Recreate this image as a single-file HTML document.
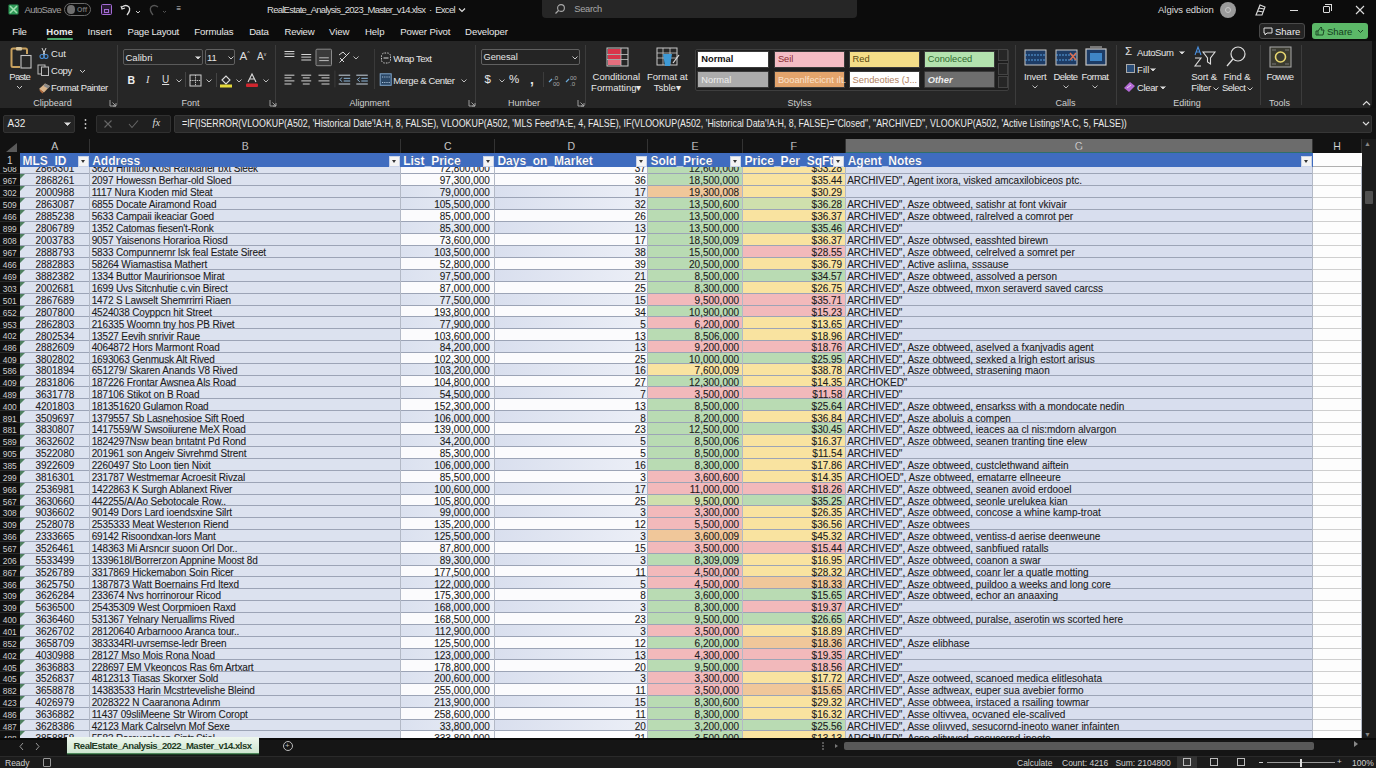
<!DOCTYPE html><html><head><meta charset="utf-8"><style>
*{box-sizing:border-box}
html,body{margin:0;padding:0}
body{width:1376px;height:768px;overflow:hidden;position:relative;background:#101010;font-family:"Liberation Sans",sans-serif;color:#e6e6e6}
.a{position:absolute}
.t{position:absolute;white-space:nowrap;line-height:1}
.grid .t{font-size:10px;color:#1c1c1c;-webkit-text-stroke:0.1px #1c1c1c}
.rh{position:absolute;left:0;width:19.6px;text-align:center;font-size:8.4px;color:#cfcfcf;white-space:nowrap;line-height:1}
</style></head><body>
<div class="grid"><div class="a" style="left:0;top:138px;width:20px;height:599.6px;background:#111"></div><div class="a" style="left:0;top:167.4px;width:1362px;height:570.20px;overflow:hidden"><div class="a" style="left:20.0px;top:-6.00px;width:380.7px;height:12.00px;background:#dce2ef"></div><div class="a" style="left:400.7px;top:-6.00px;width:247.2px;height:12.00px;background:#fbfbfd"></div><div class="a" style="left:647.9px;top:-6.00px;width:94.2px;height:12.00px;background:#b9dbb3"></div><div class="a" style="left:742.1px;top:-6.00px;width:103.1px;height:12.00px;background:#f9e3a0"></div><div class="a" style="left:845.2px;top:-6.00px;width:467.3px;height:12.00px;background:#d8deee"></div><div class="a" style="left:1312.5px;top:-6.00px;width:49.0px;height:12.00px;background:#fdfdfd"></div><div class="a" style="left:20.0px;top:6.00px;width:380.7px;height:12.00px;background:#dce2ef"></div><div class="a" style="left:400.7px;top:6.00px;width:247.2px;height:12.00px;background:#fbfbfd"></div><div class="a" style="left:647.9px;top:6.00px;width:94.2px;height:12.00px;background:#b9dbb3"></div><div class="a" style="left:742.1px;top:6.00px;width:103.1px;height:12.00px;background:#f9e3a0"></div><div class="a" style="left:845.2px;top:6.00px;width:467.3px;height:12.00px;background:#d8deee"></div><div class="a" style="left:1312.5px;top:6.00px;width:49.0px;height:12.00px;background:#fdfdfd"></div><div class="a" style="left:20.0px;top:18.00px;width:380.7px;height:12.00px;background:#dce2ef"></div><div class="a" style="left:400.7px;top:18.00px;width:94.2px;height:12.00px;background:linear-gradient(90deg,#dbe1ef,#e9edf6)"></div><div class="a" style="left:494.9px;top:18.00px;width:153.0px;height:12.00px;background:linear-gradient(90deg,#d9dfee,#eceff7)"></div><div class="a" style="left:647.9px;top:18.00px;width:94.2px;height:12.00px;background:#f0c79a"></div><div class="a" style="left:742.1px;top:18.00px;width:103.1px;height:12.00px;background:#f9e3a0"></div><div class="a" style="left:845.2px;top:18.00px;width:467.3px;height:12.00px;background:#d8deee"></div><div class="a" style="left:1312.5px;top:18.00px;width:49.0px;height:12.00px;background:#fdfdfd"></div><div class="a" style="left:20.0px;top:30.00px;width:380.7px;height:12.00px;background:#dce2ef"></div><div class="a" style="left:400.7px;top:30.00px;width:94.2px;height:12.00px;background:linear-gradient(90deg,#dbe1ef,#e9edf6)"></div><div class="a" style="left:494.9px;top:30.00px;width:153.0px;height:12.00px;background:linear-gradient(90deg,#d9dfee,#eceff7)"></div><div class="a" style="left:647.9px;top:30.00px;width:94.2px;height:12.00px;background:#b9dbb3"></div><div class="a" style="left:742.1px;top:30.00px;width:103.1px;height:12.00px;background:#cfe0ad"></div><div class="a" style="left:845.2px;top:30.00px;width:467.3px;height:12.00px;background:#d8deee"></div><div class="a" style="left:1312.5px;top:30.00px;width:49.0px;height:12.00px;background:#fdfdfd"></div><div class="a" style="left:20.0px;top:42.00px;width:380.7px;height:12.00px;background:#dce2ef"></div><div class="a" style="left:400.7px;top:42.00px;width:247.2px;height:12.00px;background:#fbfbfd"></div><div class="a" style="left:647.9px;top:42.00px;width:94.2px;height:12.00px;background:#b9dbb3"></div><div class="a" style="left:742.1px;top:42.00px;width:103.1px;height:12.00px;background:#f9e3a0"></div><div class="a" style="left:845.2px;top:42.00px;width:467.3px;height:12.00px;background:#d8deee"></div><div class="a" style="left:1312.5px;top:42.00px;width:49.0px;height:12.00px;background:#fdfdfd"></div><div class="a" style="left:20.0px;top:54.00px;width:380.7px;height:12.00px;background:#dce2ef"></div><div class="a" style="left:400.7px;top:54.00px;width:94.2px;height:12.00px;background:linear-gradient(90deg,#dbe1ef,#e9edf6)"></div><div class="a" style="left:494.9px;top:54.00px;width:153.0px;height:12.00px;background:linear-gradient(90deg,#d9dfee,#eceff7)"></div><div class="a" style="left:647.9px;top:54.00px;width:94.2px;height:12.00px;background:#b9dbb3"></div><div class="a" style="left:742.1px;top:54.00px;width:103.1px;height:12.00px;background:#b9dbb3"></div><div class="a" style="left:845.2px;top:54.00px;width:467.3px;height:12.00px;background:#d8deee"></div><div class="a" style="left:1312.5px;top:54.00px;width:49.0px;height:12.00px;background:#fdfdfd"></div><div class="a" style="left:20.0px;top:66.00px;width:380.7px;height:11.97px;background:#dce2ef"></div><div class="a" style="left:400.7px;top:66.00px;width:247.2px;height:11.97px;background:#fbfbfd"></div><div class="a" style="left:647.9px;top:66.00px;width:94.2px;height:11.97px;background:#b9dbb3"></div><div class="a" style="left:742.1px;top:66.00px;width:103.1px;height:11.97px;background:#f9e3a0"></div><div class="a" style="left:845.2px;top:66.00px;width:467.3px;height:11.97px;background:#d8deee"></div><div class="a" style="left:1312.5px;top:66.00px;width:49.0px;height:11.97px;background:#fdfdfd"></div><div class="a" style="left:20.0px;top:77.97px;width:380.7px;height:11.98px;background:#dce2ef"></div><div class="a" style="left:400.7px;top:77.97px;width:94.2px;height:11.98px;background:linear-gradient(90deg,#dbe1ef,#e9edf6)"></div><div class="a" style="left:494.9px;top:77.97px;width:153.0px;height:11.98px;background:linear-gradient(90deg,#d9dfee,#eceff7)"></div><div class="a" style="left:647.9px;top:77.97px;width:94.2px;height:11.98px;background:#b9dbb3"></div><div class="a" style="left:742.1px;top:77.97px;width:103.1px;height:11.98px;background:#f2b9bb"></div><div class="a" style="left:845.2px;top:77.97px;width:467.3px;height:11.98px;background:#d8deee"></div><div class="a" style="left:1312.5px;top:77.97px;width:49.0px;height:11.98px;background:#fdfdfd"></div><div class="a" style="left:20.0px;top:89.95px;width:380.7px;height:11.97px;background:#dce2ef"></div><div class="a" style="left:400.7px;top:89.95px;width:247.2px;height:11.97px;background:#fbfbfd"></div><div class="a" style="left:647.9px;top:89.95px;width:94.2px;height:11.97px;background:#b9dbb3"></div><div class="a" style="left:742.1px;top:89.95px;width:103.1px;height:11.97px;background:#f9e3a0"></div><div class="a" style="left:845.2px;top:89.95px;width:467.3px;height:11.97px;background:#d8deee"></div><div class="a" style="left:1312.5px;top:89.95px;width:49.0px;height:11.97px;background:#fdfdfd"></div><div class="a" style="left:20.0px;top:101.92px;width:380.7px;height:11.98px;background:#dce2ef"></div><div class="a" style="left:400.7px;top:101.92px;width:94.2px;height:11.98px;background:linear-gradient(90deg,#dbe1ef,#e9edf6)"></div><div class="a" style="left:494.9px;top:101.92px;width:153.0px;height:11.98px;background:linear-gradient(90deg,#d9dfee,#eceff7)"></div><div class="a" style="left:647.9px;top:101.92px;width:94.2px;height:11.98px;background:#b9dbb3"></div><div class="a" style="left:742.1px;top:101.92px;width:103.1px;height:11.98px;background:#b9dbb3"></div><div class="a" style="left:845.2px;top:101.92px;width:467.3px;height:11.98px;background:#d8deee"></div><div class="a" style="left:1312.5px;top:101.92px;width:49.0px;height:11.98px;background:#fdfdfd"></div><div class="a" style="left:20.0px;top:113.90px;width:380.7px;height:11.90px;background:#dce2ef"></div><div class="a" style="left:400.7px;top:113.90px;width:247.2px;height:11.90px;background:#fbfbfd"></div><div class="a" style="left:647.9px;top:113.90px;width:94.2px;height:11.90px;background:#b9dbb3"></div><div class="a" style="left:742.1px;top:113.90px;width:103.1px;height:11.90px;background:#f9e3a0"></div><div class="a" style="left:845.2px;top:113.90px;width:467.3px;height:11.90px;background:#d8deee"></div><div class="a" style="left:1312.5px;top:113.90px;width:49.0px;height:11.90px;background:#fdfdfd"></div><div class="a" style="left:20.0px;top:125.80px;width:380.7px;height:11.90px;background:#dce2ef"></div><div class="a" style="left:400.7px;top:125.80px;width:94.2px;height:11.90px;background:linear-gradient(90deg,#dbe1ef,#e9edf6)"></div><div class="a" style="left:494.9px;top:125.80px;width:153.0px;height:11.90px;background:linear-gradient(90deg,#d9dfee,#eceff7)"></div><div class="a" style="left:647.9px;top:125.80px;width:94.2px;height:11.90px;background:#f2b9bb"></div><div class="a" style="left:742.1px;top:125.80px;width:103.1px;height:11.90px;background:#f2b9bb"></div><div class="a" style="left:845.2px;top:125.80px;width:467.3px;height:11.90px;background:#d8deee"></div><div class="a" style="left:1312.5px;top:125.80px;width:49.0px;height:11.90px;background:#fdfdfd"></div><div class="a" style="left:20.0px;top:137.70px;width:380.7px;height:11.90px;background:#dce2ef"></div><div class="a" style="left:400.7px;top:137.70px;width:247.2px;height:11.90px;background:#fbfbfd"></div><div class="a" style="left:647.9px;top:137.70px;width:94.2px;height:11.90px;background:#b9dbb3"></div><div class="a" style="left:742.1px;top:137.70px;width:103.1px;height:11.90px;background:#f2b9bb"></div><div class="a" style="left:845.2px;top:137.70px;width:467.3px;height:11.90px;background:#d8deee"></div><div class="a" style="left:1312.5px;top:137.70px;width:49.0px;height:11.90px;background:#fdfdfd"></div><div class="a" style="left:20.0px;top:149.60px;width:380.7px;height:11.90px;background:#dce2ef"></div><div class="a" style="left:400.7px;top:149.60px;width:94.2px;height:11.90px;background:linear-gradient(90deg,#dbe1ef,#e9edf6)"></div><div class="a" style="left:494.9px;top:149.60px;width:153.0px;height:11.90px;background:linear-gradient(90deg,#d9dfee,#eceff7)"></div><div class="a" style="left:647.9px;top:149.60px;width:94.2px;height:11.90px;background:#f2b9bb"></div><div class="a" style="left:742.1px;top:149.60px;width:103.1px;height:11.90px;background:#f9e3a0"></div><div class="a" style="left:845.2px;top:149.60px;width:467.3px;height:11.90px;background:#d8deee"></div><div class="a" style="left:1312.5px;top:149.60px;width:49.0px;height:11.90px;background:#fdfdfd"></div><div class="a" style="left:20.0px;top:161.50px;width:380.7px;height:11.90px;background:#dce2ef"></div><div class="a" style="left:400.7px;top:161.50px;width:247.2px;height:11.90px;background:#fbfbfd"></div><div class="a" style="left:647.9px;top:161.50px;width:94.2px;height:11.90px;background:#b9dbb3"></div><div class="a" style="left:742.1px;top:161.50px;width:103.1px;height:11.90px;background:#f9e3a0"></div><div class="a" style="left:845.2px;top:161.50px;width:467.3px;height:11.90px;background:#d8deee"></div><div class="a" style="left:1312.5px;top:161.50px;width:49.0px;height:11.90px;background:#fdfdfd"></div><div class="a" style="left:20.0px;top:173.40px;width:380.7px;height:11.60px;background:#dce2ef"></div><div class="a" style="left:400.7px;top:173.40px;width:94.2px;height:11.60px;background:linear-gradient(90deg,#dbe1ef,#e9edf6)"></div><div class="a" style="left:494.9px;top:173.40px;width:153.0px;height:11.60px;background:linear-gradient(90deg,#d9dfee,#eceff7)"></div><div class="a" style="left:647.9px;top:173.40px;width:94.2px;height:11.60px;background:#f2b9bb"></div><div class="a" style="left:742.1px;top:173.40px;width:103.1px;height:11.60px;background:#f2b9bb"></div><div class="a" style="left:845.2px;top:173.40px;width:467.3px;height:11.60px;background:#d8deee"></div><div class="a" style="left:1312.5px;top:173.40px;width:49.0px;height:11.60px;background:#fdfdfd"></div><div class="a" style="left:20.0px;top:185.00px;width:380.7px;height:11.40px;background:#dce2ef"></div><div class="a" style="left:400.7px;top:185.00px;width:247.2px;height:11.40px;background:#fbfbfd"></div><div class="a" style="left:647.9px;top:185.00px;width:94.2px;height:11.40px;background:#b9dbb3"></div><div class="a" style="left:742.1px;top:185.00px;width:103.1px;height:11.40px;background:#b9dbb3"></div><div class="a" style="left:845.2px;top:185.00px;width:467.3px;height:11.40px;background:#d8deee"></div><div class="a" style="left:1312.5px;top:185.00px;width:49.0px;height:11.40px;background:#fdfdfd"></div><div class="a" style="left:20.0px;top:196.40px;width:380.7px;height:11.50px;background:#dce2ef"></div><div class="a" style="left:400.7px;top:196.40px;width:94.2px;height:11.50px;background:linear-gradient(90deg,#dbe1ef,#e9edf6)"></div><div class="a" style="left:494.9px;top:196.40px;width:153.0px;height:11.50px;background:linear-gradient(90deg,#d9dfee,#eceff7)"></div><div class="a" style="left:647.9px;top:196.40px;width:94.2px;height:11.50px;background:#f9e3a0"></div><div class="a" style="left:742.1px;top:196.40px;width:103.1px;height:11.50px;background:#f9e3a0"></div><div class="a" style="left:845.2px;top:196.40px;width:467.3px;height:11.50px;background:#d8deee"></div><div class="a" style="left:1312.5px;top:196.40px;width:49.0px;height:11.50px;background:#fdfdfd"></div><div class="a" style="left:20.0px;top:207.90px;width:380.7px;height:11.70px;background:#dce2ef"></div><div class="a" style="left:400.7px;top:207.90px;width:247.2px;height:11.70px;background:#fbfbfd"></div><div class="a" style="left:647.9px;top:207.90px;width:94.2px;height:11.70px;background:#b9dbb3"></div><div class="a" style="left:742.1px;top:207.90px;width:103.1px;height:11.70px;background:#f9e3a0"></div><div class="a" style="left:845.2px;top:207.90px;width:467.3px;height:11.70px;background:#d8deee"></div><div class="a" style="left:1312.5px;top:207.90px;width:49.0px;height:11.70px;background:#fdfdfd"></div><div class="a" style="left:20.0px;top:219.60px;width:380.7px;height:12.00px;background:#dce2ef"></div><div class="a" style="left:400.7px;top:219.60px;width:94.2px;height:12.00px;background:linear-gradient(90deg,#dbe1ef,#e9edf6)"></div><div class="a" style="left:494.9px;top:219.60px;width:153.0px;height:12.00px;background:linear-gradient(90deg,#d9dfee,#eceff7)"></div><div class="a" style="left:647.9px;top:219.60px;width:94.2px;height:12.00px;background:#f2b9bb"></div><div class="a" style="left:742.1px;top:219.60px;width:103.1px;height:12.00px;background:#f2b9bb"></div><div class="a" style="left:845.2px;top:219.60px;width:467.3px;height:12.00px;background:#d8deee"></div><div class="a" style="left:1312.5px;top:219.60px;width:49.0px;height:12.00px;background:#fdfdfd"></div><div class="a" style="left:20.0px;top:231.60px;width:380.7px;height:12.00px;background:#dce2ef"></div><div class="a" style="left:400.7px;top:231.60px;width:247.2px;height:12.00px;background:#fbfbfd"></div><div class="a" style="left:647.9px;top:231.60px;width:94.2px;height:12.00px;background:#b9dbb3"></div><div class="a" style="left:742.1px;top:231.60px;width:103.1px;height:12.00px;background:#b9dbb3"></div><div class="a" style="left:845.2px;top:231.60px;width:467.3px;height:12.00px;background:#d8deee"></div><div class="a" style="left:1312.5px;top:231.60px;width:49.0px;height:12.00px;background:#fdfdfd"></div><div class="a" style="left:20.0px;top:243.60px;width:380.7px;height:11.70px;background:#dce2ef"></div><div class="a" style="left:400.7px;top:243.60px;width:94.2px;height:11.70px;background:linear-gradient(90deg,#dbe1ef,#e9edf6)"></div><div class="a" style="left:494.9px;top:243.60px;width:153.0px;height:11.70px;background:linear-gradient(90deg,#d9dfee,#eceff7)"></div><div class="a" style="left:647.9px;top:243.60px;width:94.2px;height:11.70px;background:#b9dbb3"></div><div class="a" style="left:742.1px;top:243.60px;width:103.1px;height:11.70px;background:#f9e3a0"></div><div class="a" style="left:845.2px;top:243.60px;width:467.3px;height:11.70px;background:#d8deee"></div><div class="a" style="left:1312.5px;top:243.60px;width:49.0px;height:11.70px;background:#fdfdfd"></div><div class="a" style="left:20.0px;top:255.30px;width:380.7px;height:11.87px;background:#dce2ef"></div><div class="a" style="left:400.7px;top:255.30px;width:247.2px;height:11.87px;background:#fbfbfd"></div><div class="a" style="left:647.9px;top:255.30px;width:94.2px;height:11.87px;background:#b9dbb3"></div><div class="a" style="left:742.1px;top:255.30px;width:103.1px;height:11.87px;background:#b9dbb3"></div><div class="a" style="left:845.2px;top:255.30px;width:467.3px;height:11.87px;background:#d8deee"></div><div class="a" style="left:1312.5px;top:255.30px;width:49.0px;height:11.87px;background:#fdfdfd"></div><div class="a" style="left:20.0px;top:267.17px;width:380.7px;height:11.87px;background:#dce2ef"></div><div class="a" style="left:400.7px;top:267.17px;width:94.2px;height:11.87px;background:linear-gradient(90deg,#dbe1ef,#e9edf6)"></div><div class="a" style="left:494.9px;top:267.17px;width:153.0px;height:11.87px;background:linear-gradient(90deg,#d9dfee,#eceff7)"></div><div class="a" style="left:647.9px;top:267.17px;width:94.2px;height:11.87px;background:#b9dbb3"></div><div class="a" style="left:742.1px;top:267.17px;width:103.1px;height:11.87px;background:#f9e3a0"></div><div class="a" style="left:845.2px;top:267.17px;width:467.3px;height:11.87px;background:#d8deee"></div><div class="a" style="left:1312.5px;top:267.17px;width:49.0px;height:11.87px;background:#fdfdfd"></div><div class="a" style="left:20.0px;top:279.03px;width:380.7px;height:11.87px;background:#dce2ef"></div><div class="a" style="left:400.7px;top:279.03px;width:247.2px;height:11.87px;background:#fbfbfd"></div><div class="a" style="left:647.9px;top:279.03px;width:94.2px;height:11.87px;background:#b9dbb3"></div><div class="a" style="left:742.1px;top:279.03px;width:103.1px;height:11.87px;background:#f9e3a0"></div><div class="a" style="left:845.2px;top:279.03px;width:467.3px;height:11.87px;background:#d8deee"></div><div class="a" style="left:1312.5px;top:279.03px;width:49.0px;height:11.87px;background:#fdfdfd"></div><div class="a" style="left:20.0px;top:290.90px;width:380.7px;height:11.97px;background:#dce2ef"></div><div class="a" style="left:400.7px;top:290.90px;width:94.2px;height:11.97px;background:linear-gradient(90deg,#dbe1ef,#e9edf6)"></div><div class="a" style="left:494.9px;top:290.90px;width:153.0px;height:11.97px;background:linear-gradient(90deg,#d9dfee,#eceff7)"></div><div class="a" style="left:647.9px;top:290.90px;width:94.2px;height:11.97px;background:#b9dbb3"></div><div class="a" style="left:742.1px;top:290.90px;width:103.1px;height:11.97px;background:#f9e3a0"></div><div class="a" style="left:845.2px;top:290.90px;width:467.3px;height:11.97px;background:#d8deee"></div><div class="a" style="left:1312.5px;top:290.90px;width:49.0px;height:11.97px;background:#fdfdfd"></div><div class="a" style="left:20.0px;top:302.87px;width:380.7px;height:11.97px;background:#dce2ef"></div><div class="a" style="left:400.7px;top:302.87px;width:247.2px;height:11.97px;background:#fbfbfd"></div><div class="a" style="left:647.9px;top:302.87px;width:94.2px;height:11.97px;background:#f2b9bb"></div><div class="a" style="left:742.1px;top:302.87px;width:103.1px;height:11.97px;background:#f9e3a0"></div><div class="a" style="left:845.2px;top:302.87px;width:467.3px;height:11.97px;background:#d8deee"></div><div class="a" style="left:1312.5px;top:302.87px;width:49.0px;height:11.97px;background:#fdfdfd"></div><div class="a" style="left:20.0px;top:314.83px;width:380.7px;height:11.97px;background:#dce2ef"></div><div class="a" style="left:400.7px;top:314.83px;width:94.2px;height:11.97px;background:linear-gradient(90deg,#dbe1ef,#e9edf6)"></div><div class="a" style="left:494.9px;top:314.83px;width:153.0px;height:11.97px;background:linear-gradient(90deg,#d9dfee,#eceff7)"></div><div class="a" style="left:647.9px;top:314.83px;width:94.2px;height:11.97px;background:#f2b9bb"></div><div class="a" style="left:742.1px;top:314.83px;width:103.1px;height:11.97px;background:#f2b9bb"></div><div class="a" style="left:845.2px;top:314.83px;width:467.3px;height:11.97px;background:#d8deee"></div><div class="a" style="left:1312.5px;top:314.83px;width:49.0px;height:11.97px;background:#fdfdfd"></div><div class="a" style="left:20.0px;top:326.80px;width:380.7px;height:11.50px;background:#dce2ef"></div><div class="a" style="left:400.7px;top:326.80px;width:247.2px;height:11.50px;background:#fbfbfd"></div><div class="a" style="left:647.9px;top:326.80px;width:94.2px;height:11.50px;background:#cfe0ad"></div><div class="a" style="left:742.1px;top:326.80px;width:103.1px;height:11.50px;background:#b9dbb3"></div><div class="a" style="left:845.2px;top:326.80px;width:467.3px;height:11.50px;background:#d8deee"></div><div class="a" style="left:1312.5px;top:326.80px;width:49.0px;height:11.50px;background:#fdfdfd"></div><div class="a" style="left:20.0px;top:338.30px;width:380.7px;height:11.90px;background:#dce2ef"></div><div class="a" style="left:400.7px;top:338.30px;width:94.2px;height:11.90px;background:linear-gradient(90deg,#dbe1ef,#e9edf6)"></div><div class="a" style="left:494.9px;top:338.30px;width:153.0px;height:11.90px;background:linear-gradient(90deg,#d9dfee,#eceff7)"></div><div class="a" style="left:647.9px;top:338.30px;width:94.2px;height:11.90px;background:#f2b9bb"></div><div class="a" style="left:742.1px;top:338.30px;width:103.1px;height:11.90px;background:#f9e3a0"></div><div class="a" style="left:845.2px;top:338.30px;width:467.3px;height:11.90px;background:#d8deee"></div><div class="a" style="left:1312.5px;top:338.30px;width:49.0px;height:11.90px;background:#fdfdfd"></div><div class="a" style="left:20.0px;top:350.20px;width:380.7px;height:11.90px;background:#dce2ef"></div><div class="a" style="left:400.7px;top:350.20px;width:247.2px;height:11.90px;background:#fbfbfd"></div><div class="a" style="left:647.9px;top:350.20px;width:94.2px;height:11.90px;background:#f2b9bb"></div><div class="a" style="left:742.1px;top:350.20px;width:103.1px;height:11.90px;background:#f9e3a0"></div><div class="a" style="left:845.2px;top:350.20px;width:467.3px;height:11.90px;background:#d8deee"></div><div class="a" style="left:1312.5px;top:350.20px;width:49.0px;height:11.90px;background:#fdfdfd"></div><div class="a" style="left:20.0px;top:362.10px;width:380.7px;height:11.87px;background:#dce2ef"></div><div class="a" style="left:400.7px;top:362.10px;width:94.2px;height:11.87px;background:linear-gradient(90deg,#dbe1ef,#e9edf6)"></div><div class="a" style="left:494.9px;top:362.10px;width:153.0px;height:11.87px;background:linear-gradient(90deg,#d9dfee,#eceff7)"></div><div class="a" style="left:647.9px;top:362.10px;width:94.2px;height:11.87px;background:#f0c79a"></div><div class="a" style="left:742.1px;top:362.10px;width:103.1px;height:11.87px;background:#f9e3a0"></div><div class="a" style="left:845.2px;top:362.10px;width:467.3px;height:11.87px;background:#d8deee"></div><div class="a" style="left:1312.5px;top:362.10px;width:49.0px;height:11.87px;background:#fdfdfd"></div><div class="a" style="left:20.0px;top:373.97px;width:380.7px;height:11.87px;background:#dce2ef"></div><div class="a" style="left:400.7px;top:373.97px;width:247.2px;height:11.87px;background:#fbfbfd"></div><div class="a" style="left:647.9px;top:373.97px;width:94.2px;height:11.87px;background:#f2b9bb"></div><div class="a" style="left:742.1px;top:373.97px;width:103.1px;height:11.87px;background:#f2b9bb"></div><div class="a" style="left:845.2px;top:373.97px;width:467.3px;height:11.87px;background:#d8deee"></div><div class="a" style="left:1312.5px;top:373.97px;width:49.0px;height:11.87px;background:#fdfdfd"></div><div class="a" style="left:20.0px;top:385.83px;width:380.7px;height:11.87px;background:#dce2ef"></div><div class="a" style="left:400.7px;top:385.83px;width:94.2px;height:11.87px;background:linear-gradient(90deg,#dbe1ef,#e9edf6)"></div><div class="a" style="left:494.9px;top:385.83px;width:153.0px;height:11.87px;background:linear-gradient(90deg,#d9dfee,#eceff7)"></div><div class="a" style="left:647.9px;top:385.83px;width:94.2px;height:11.87px;background:#b9dbb3"></div><div class="a" style="left:742.1px;top:385.83px;width:103.1px;height:11.87px;background:#f9e3a0"></div><div class="a" style="left:845.2px;top:385.83px;width:467.3px;height:11.87px;background:#d8deee"></div><div class="a" style="left:1312.5px;top:385.83px;width:49.0px;height:11.87px;background:#fdfdfd"></div><div class="a" style="left:20.0px;top:397.70px;width:380.7px;height:11.83px;background:#dce2ef"></div><div class="a" style="left:400.7px;top:397.70px;width:247.2px;height:11.83px;background:#fbfbfd"></div><div class="a" style="left:647.9px;top:397.70px;width:94.2px;height:11.83px;background:#f2b9bb"></div><div class="a" style="left:742.1px;top:397.70px;width:103.1px;height:11.83px;background:#f9e3a0"></div><div class="a" style="left:845.2px;top:397.70px;width:467.3px;height:11.83px;background:#d8deee"></div><div class="a" style="left:1312.5px;top:397.70px;width:49.0px;height:11.83px;background:#fdfdfd"></div><div class="a" style="left:20.0px;top:409.53px;width:380.7px;height:11.83px;background:#dce2ef"></div><div class="a" style="left:400.7px;top:409.53px;width:94.2px;height:11.83px;background:linear-gradient(90deg,#dbe1ef,#e9edf6)"></div><div class="a" style="left:494.9px;top:409.53px;width:153.0px;height:11.83px;background:linear-gradient(90deg,#d9dfee,#eceff7)"></div><div class="a" style="left:647.9px;top:409.53px;width:94.2px;height:11.83px;background:#f2b9bb"></div><div class="a" style="left:742.1px;top:409.53px;width:103.1px;height:11.83px;background:#f0c79a"></div><div class="a" style="left:845.2px;top:409.53px;width:467.3px;height:11.83px;background:#d8deee"></div><div class="a" style="left:1312.5px;top:409.53px;width:49.0px;height:11.83px;background:#fdfdfd"></div><div class="a" style="left:20.0px;top:421.37px;width:380.7px;height:11.83px;background:#dce2ef"></div><div class="a" style="left:400.7px;top:421.37px;width:247.2px;height:11.83px;background:#fbfbfd"></div><div class="a" style="left:647.9px;top:421.37px;width:94.2px;height:11.83px;background:#b9dbb3"></div><div class="a" style="left:742.1px;top:421.37px;width:103.1px;height:11.83px;background:#b9dbb3"></div><div class="a" style="left:845.2px;top:421.37px;width:467.3px;height:11.83px;background:#d8deee"></div><div class="a" style="left:1312.5px;top:421.37px;width:49.0px;height:11.83px;background:#fdfdfd"></div><div class="a" style="left:20.0px;top:433.20px;width:380.7px;height:11.90px;background:#dce2ef"></div><div class="a" style="left:400.7px;top:433.20px;width:94.2px;height:11.90px;background:linear-gradient(90deg,#dbe1ef,#e9edf6)"></div><div class="a" style="left:494.9px;top:433.20px;width:153.0px;height:11.90px;background:linear-gradient(90deg,#d9dfee,#eceff7)"></div><div class="a" style="left:647.9px;top:433.20px;width:94.2px;height:11.90px;background:#b9dbb3"></div><div class="a" style="left:742.1px;top:433.20px;width:103.1px;height:11.90px;background:#f2b9bb"></div><div class="a" style="left:845.2px;top:433.20px;width:467.3px;height:11.90px;background:#d8deee"></div><div class="a" style="left:1312.5px;top:433.20px;width:49.0px;height:11.90px;background:#fdfdfd"></div><div class="a" style="left:20.0px;top:445.10px;width:380.7px;height:11.90px;background:#dce2ef"></div><div class="a" style="left:400.7px;top:445.10px;width:247.2px;height:11.90px;background:#fbfbfd"></div><div class="a" style="left:647.9px;top:445.10px;width:94.2px;height:11.90px;background:#b9dbb3"></div><div class="a" style="left:742.1px;top:445.10px;width:103.1px;height:11.90px;background:#b9dbb3"></div><div class="a" style="left:845.2px;top:445.10px;width:467.3px;height:11.90px;background:#d8deee"></div><div class="a" style="left:1312.5px;top:445.10px;width:49.0px;height:11.90px;background:#fdfdfd"></div><div class="a" style="left:20.0px;top:457.00px;width:380.7px;height:11.90px;background:#dce2ef"></div><div class="a" style="left:400.7px;top:457.00px;width:94.2px;height:11.90px;background:linear-gradient(90deg,#dbe1ef,#e9edf6)"></div><div class="a" style="left:494.9px;top:457.00px;width:153.0px;height:11.90px;background:linear-gradient(90deg,#d9dfee,#eceff7)"></div><div class="a" style="left:647.9px;top:457.00px;width:94.2px;height:11.90px;background:#f2b9bb"></div><div class="a" style="left:742.1px;top:457.00px;width:103.1px;height:11.90px;background:#f9e3a0"></div><div class="a" style="left:845.2px;top:457.00px;width:467.3px;height:11.90px;background:#d8deee"></div><div class="a" style="left:1312.5px;top:457.00px;width:49.0px;height:11.90px;background:#fdfdfd"></div><div class="a" style="left:20.0px;top:468.90px;width:380.7px;height:11.83px;background:#dce2ef"></div><div class="a" style="left:400.7px;top:468.90px;width:247.2px;height:11.83px;background:#fbfbfd"></div><div class="a" style="left:647.9px;top:468.90px;width:94.2px;height:11.83px;background:#b9dbb3"></div><div class="a" style="left:742.1px;top:468.90px;width:103.1px;height:11.83px;background:#f0c79a"></div><div class="a" style="left:845.2px;top:468.90px;width:467.3px;height:11.83px;background:#d8deee"></div><div class="a" style="left:1312.5px;top:468.90px;width:49.0px;height:11.83px;background:#fdfdfd"></div><div class="a" style="left:20.0px;top:480.73px;width:380.7px;height:11.83px;background:#dce2ef"></div><div class="a" style="left:400.7px;top:480.73px;width:94.2px;height:11.83px;background:linear-gradient(90deg,#dbe1ef,#e9edf6)"></div><div class="a" style="left:494.9px;top:480.73px;width:153.0px;height:11.83px;background:linear-gradient(90deg,#d9dfee,#eceff7)"></div><div class="a" style="left:647.9px;top:480.73px;width:94.2px;height:11.83px;background:#f2b9bb"></div><div class="a" style="left:742.1px;top:480.73px;width:103.1px;height:11.83px;background:#f2b9bb"></div><div class="a" style="left:845.2px;top:480.73px;width:467.3px;height:11.83px;background:#d8deee"></div><div class="a" style="left:1312.5px;top:480.73px;width:49.0px;height:11.83px;background:#fdfdfd"></div><div class="a" style="left:20.0px;top:492.57px;width:380.7px;height:11.83px;background:#dce2ef"></div><div class="a" style="left:400.7px;top:492.57px;width:247.2px;height:11.83px;background:#fbfbfd"></div><div class="a" style="left:647.9px;top:492.57px;width:94.2px;height:11.83px;background:#b9dbb3"></div><div class="a" style="left:742.1px;top:492.57px;width:103.1px;height:11.83px;background:#f2b9bb"></div><div class="a" style="left:845.2px;top:492.57px;width:467.3px;height:11.83px;background:#d8deee"></div><div class="a" style="left:1312.5px;top:492.57px;width:49.0px;height:11.83px;background:#fdfdfd"></div><div class="a" style="left:20.0px;top:504.40px;width:380.7px;height:11.80px;background:#dce2ef"></div><div class="a" style="left:400.7px;top:504.40px;width:94.2px;height:11.80px;background:linear-gradient(90deg,#dbe1ef,#e9edf6)"></div><div class="a" style="left:494.9px;top:504.40px;width:153.0px;height:11.80px;background:linear-gradient(90deg,#d9dfee,#eceff7)"></div><div class="a" style="left:647.9px;top:504.40px;width:94.2px;height:11.80px;background:#f2b9bb"></div><div class="a" style="left:742.1px;top:504.40px;width:103.1px;height:11.80px;background:#f9e3a0"></div><div class="a" style="left:845.2px;top:504.40px;width:467.3px;height:11.80px;background:#d8deee"></div><div class="a" style="left:1312.5px;top:504.40px;width:49.0px;height:11.80px;background:#fdfdfd"></div><div class="a" style="left:20.0px;top:516.20px;width:380.7px;height:11.80px;background:#dce2ef"></div><div class="a" style="left:400.7px;top:516.20px;width:247.2px;height:11.80px;background:#fbfbfd"></div><div class="a" style="left:647.9px;top:516.20px;width:94.2px;height:11.80px;background:#f2b9bb"></div><div class="a" style="left:742.1px;top:516.20px;width:103.1px;height:11.80px;background:#f0c79a"></div><div class="a" style="left:845.2px;top:516.20px;width:467.3px;height:11.80px;background:#d8deee"></div><div class="a" style="left:1312.5px;top:516.20px;width:49.0px;height:11.80px;background:#fdfdfd"></div><div class="a" style="left:20.0px;top:528.00px;width:380.7px;height:11.80px;background:#dce2ef"></div><div class="a" style="left:400.7px;top:528.00px;width:94.2px;height:11.80px;background:linear-gradient(90deg,#dbe1ef,#e9edf6)"></div><div class="a" style="left:494.9px;top:528.00px;width:153.0px;height:11.80px;background:linear-gradient(90deg,#d9dfee,#eceff7)"></div><div class="a" style="left:647.9px;top:528.00px;width:94.2px;height:11.80px;background:#b9dbb3"></div><div class="a" style="left:742.1px;top:528.00px;width:103.1px;height:11.80px;background:#f9e3a0"></div><div class="a" style="left:845.2px;top:528.00px;width:467.3px;height:11.80px;background:#d8deee"></div><div class="a" style="left:1312.5px;top:528.00px;width:49.0px;height:11.80px;background:#fdfdfd"></div><div class="a" style="left:20.0px;top:539.80px;width:380.7px;height:11.90px;background:#dce2ef"></div><div class="a" style="left:400.7px;top:539.80px;width:247.2px;height:11.90px;background:#fbfbfd"></div><div class="a" style="left:647.9px;top:539.80px;width:94.2px;height:11.90px;background:#b9dbb3"></div><div class="a" style="left:742.1px;top:539.80px;width:103.1px;height:11.90px;background:#f9e3a0"></div><div class="a" style="left:845.2px;top:539.80px;width:467.3px;height:11.90px;background:#d8deee"></div><div class="a" style="left:1312.5px;top:539.80px;width:49.0px;height:11.90px;background:#fdfdfd"></div><div class="a" style="left:20.0px;top:551.70px;width:380.7px;height:11.90px;background:#dce2ef"></div><div class="a" style="left:400.7px;top:551.70px;width:94.2px;height:11.90px;background:linear-gradient(90deg,#dbe1ef,#e9edf6)"></div><div class="a" style="left:494.9px;top:551.70px;width:153.0px;height:11.90px;background:linear-gradient(90deg,#d9dfee,#eceff7)"></div><div class="a" style="left:647.9px;top:551.70px;width:94.2px;height:11.90px;background:#b9dbb3"></div><div class="a" style="left:742.1px;top:551.70px;width:103.1px;height:11.90px;background:#b9dbb3"></div><div class="a" style="left:845.2px;top:551.70px;width:467.3px;height:11.90px;background:#d8deee"></div><div class="a" style="left:1312.5px;top:551.70px;width:49.0px;height:11.90px;background:#fdfdfd"></div><div class="a" style="left:20.0px;top:563.60px;width:380.7px;height:11.90px;background:#dce2ef"></div><div class="a" style="left:400.7px;top:563.60px;width:247.2px;height:11.90px;background:#fbfbfd"></div><div class="a" style="left:647.9px;top:563.60px;width:94.2px;height:11.90px;background:#b9dbb3"></div><div class="a" style="left:742.1px;top:563.60px;width:103.1px;height:11.90px;background:#f9e3a0"></div><div class="a" style="left:845.2px;top:563.60px;width:467.3px;height:11.90px;background:#d8deee"></div><div class="a" style="left:1312.5px;top:563.60px;width:49.0px;height:11.90px;background:#fdfdfd"></div><div class="a" style="left:20px;top:-6.50px;width:1292.5px;height:1px;background:#9ca4b6"></div><div class="a" style="left:1312.5px;top:-6.50px;width:49px;height:1px;background:#cfcfcf"></div><div class="a" style="left:0;top:-6.50px;width:20px;height:1px;background:#2a2a2a"></div><div class="a" style="left:20px;top:5.50px;width:1292.5px;height:1px;background:#9ca4b6"></div><div class="a" style="left:1312.5px;top:5.50px;width:49px;height:1px;background:#cfcfcf"></div><div class="a" style="left:0;top:5.50px;width:20px;height:1px;background:#2a2a2a"></div><div class="a" style="left:20px;top:17.50px;width:1292.5px;height:1px;background:#9ca4b6"></div><div class="a" style="left:1312.5px;top:17.50px;width:49px;height:1px;background:#cfcfcf"></div><div class="a" style="left:0;top:17.50px;width:20px;height:1px;background:#2a2a2a"></div><div class="a" style="left:20px;top:29.50px;width:1292.5px;height:1px;background:#9ca4b6"></div><div class="a" style="left:1312.5px;top:29.50px;width:49px;height:1px;background:#cfcfcf"></div><div class="a" style="left:0;top:29.50px;width:20px;height:1px;background:#2a2a2a"></div><div class="a" style="left:20px;top:41.50px;width:1292.5px;height:1px;background:#9ca4b6"></div><div class="a" style="left:1312.5px;top:41.50px;width:49px;height:1px;background:#cfcfcf"></div><div class="a" style="left:0;top:41.50px;width:20px;height:1px;background:#2a2a2a"></div><div class="a" style="left:20px;top:53.50px;width:1292.5px;height:1px;background:#9ca4b6"></div><div class="a" style="left:1312.5px;top:53.50px;width:49px;height:1px;background:#cfcfcf"></div><div class="a" style="left:0;top:53.50px;width:20px;height:1px;background:#2a2a2a"></div><div class="a" style="left:20px;top:65.50px;width:1292.5px;height:1px;background:#9ca4b6"></div><div class="a" style="left:1312.5px;top:65.50px;width:49px;height:1px;background:#cfcfcf"></div><div class="a" style="left:0;top:65.50px;width:20px;height:1px;background:#2a2a2a"></div><div class="a" style="left:20px;top:77.47px;width:1292.5px;height:1px;background:#9ca4b6"></div><div class="a" style="left:1312.5px;top:77.47px;width:49px;height:1px;background:#cfcfcf"></div><div class="a" style="left:0;top:77.47px;width:20px;height:1px;background:#2a2a2a"></div><div class="a" style="left:20px;top:89.45px;width:1292.5px;height:1px;background:#9ca4b6"></div><div class="a" style="left:1312.5px;top:89.45px;width:49px;height:1px;background:#cfcfcf"></div><div class="a" style="left:0;top:89.45px;width:20px;height:1px;background:#2a2a2a"></div><div class="a" style="left:20px;top:101.42px;width:1292.5px;height:1px;background:#9ca4b6"></div><div class="a" style="left:1312.5px;top:101.42px;width:49px;height:1px;background:#cfcfcf"></div><div class="a" style="left:0;top:101.42px;width:20px;height:1px;background:#2a2a2a"></div><div class="a" style="left:20px;top:113.40px;width:1292.5px;height:1px;background:#9ca4b6"></div><div class="a" style="left:1312.5px;top:113.40px;width:49px;height:1px;background:#cfcfcf"></div><div class="a" style="left:0;top:113.40px;width:20px;height:1px;background:#2a2a2a"></div><div class="a" style="left:20px;top:125.30px;width:1292.5px;height:1px;background:#9ca4b6"></div><div class="a" style="left:1312.5px;top:125.30px;width:49px;height:1px;background:#cfcfcf"></div><div class="a" style="left:0;top:125.30px;width:20px;height:1px;background:#2a2a2a"></div><div class="a" style="left:20px;top:137.20px;width:1292.5px;height:1px;background:#9ca4b6"></div><div class="a" style="left:1312.5px;top:137.20px;width:49px;height:1px;background:#cfcfcf"></div><div class="a" style="left:0;top:137.20px;width:20px;height:1px;background:#2a2a2a"></div><div class="a" style="left:20px;top:149.10px;width:1292.5px;height:1px;background:#9ca4b6"></div><div class="a" style="left:1312.5px;top:149.10px;width:49px;height:1px;background:#cfcfcf"></div><div class="a" style="left:0;top:149.10px;width:20px;height:1px;background:#2a2a2a"></div><div class="a" style="left:20px;top:161.00px;width:1292.5px;height:1px;background:#9ca4b6"></div><div class="a" style="left:1312.5px;top:161.00px;width:49px;height:1px;background:#cfcfcf"></div><div class="a" style="left:0;top:161.00px;width:20px;height:1px;background:#2a2a2a"></div><div class="a" style="left:20px;top:172.90px;width:1292.5px;height:1px;background:#9ca4b6"></div><div class="a" style="left:1312.5px;top:172.90px;width:49px;height:1px;background:#cfcfcf"></div><div class="a" style="left:0;top:172.90px;width:20px;height:1px;background:#2a2a2a"></div><div class="a" style="left:20px;top:184.50px;width:1292.5px;height:1px;background:#9ca4b6"></div><div class="a" style="left:1312.5px;top:184.50px;width:49px;height:1px;background:#cfcfcf"></div><div class="a" style="left:0;top:184.50px;width:20px;height:1px;background:#2a2a2a"></div><div class="a" style="left:20px;top:195.90px;width:1292.5px;height:1px;background:#9ca4b6"></div><div class="a" style="left:1312.5px;top:195.90px;width:49px;height:1px;background:#cfcfcf"></div><div class="a" style="left:0;top:195.90px;width:20px;height:1px;background:#2a2a2a"></div><div class="a" style="left:20px;top:207.40px;width:1292.5px;height:1px;background:#9ca4b6"></div><div class="a" style="left:1312.5px;top:207.40px;width:49px;height:1px;background:#cfcfcf"></div><div class="a" style="left:0;top:207.40px;width:20px;height:1px;background:#2a2a2a"></div><div class="a" style="left:20px;top:219.10px;width:1292.5px;height:1px;background:#9ca4b6"></div><div class="a" style="left:1312.5px;top:219.10px;width:49px;height:1px;background:#cfcfcf"></div><div class="a" style="left:0;top:219.10px;width:20px;height:1px;background:#2a2a2a"></div><div class="a" style="left:20px;top:231.10px;width:1292.5px;height:1px;background:#9ca4b6"></div><div class="a" style="left:1312.5px;top:231.10px;width:49px;height:1px;background:#cfcfcf"></div><div class="a" style="left:0;top:231.10px;width:20px;height:1px;background:#2a2a2a"></div><div class="a" style="left:20px;top:243.10px;width:1292.5px;height:1px;background:#9ca4b6"></div><div class="a" style="left:1312.5px;top:243.10px;width:49px;height:1px;background:#cfcfcf"></div><div class="a" style="left:0;top:243.10px;width:20px;height:1px;background:#2a2a2a"></div><div class="a" style="left:20px;top:254.80px;width:1292.5px;height:1px;background:#9ca4b6"></div><div class="a" style="left:1312.5px;top:254.80px;width:49px;height:1px;background:#cfcfcf"></div><div class="a" style="left:0;top:254.80px;width:20px;height:1px;background:#2a2a2a"></div><div class="a" style="left:20px;top:266.67px;width:1292.5px;height:1px;background:#9ca4b6"></div><div class="a" style="left:1312.5px;top:266.67px;width:49px;height:1px;background:#cfcfcf"></div><div class="a" style="left:0;top:266.67px;width:20px;height:1px;background:#2a2a2a"></div><div class="a" style="left:20px;top:278.53px;width:1292.5px;height:1px;background:#9ca4b6"></div><div class="a" style="left:1312.5px;top:278.53px;width:49px;height:1px;background:#cfcfcf"></div><div class="a" style="left:0;top:278.53px;width:20px;height:1px;background:#2a2a2a"></div><div class="a" style="left:20px;top:290.40px;width:1292.5px;height:1px;background:#9ca4b6"></div><div class="a" style="left:1312.5px;top:290.40px;width:49px;height:1px;background:#cfcfcf"></div><div class="a" style="left:0;top:290.40px;width:20px;height:1px;background:#2a2a2a"></div><div class="a" style="left:20px;top:302.37px;width:1292.5px;height:1px;background:#9ca4b6"></div><div class="a" style="left:1312.5px;top:302.37px;width:49px;height:1px;background:#cfcfcf"></div><div class="a" style="left:0;top:302.37px;width:20px;height:1px;background:#2a2a2a"></div><div class="a" style="left:20px;top:314.33px;width:1292.5px;height:1px;background:#9ca4b6"></div><div class="a" style="left:1312.5px;top:314.33px;width:49px;height:1px;background:#cfcfcf"></div><div class="a" style="left:0;top:314.33px;width:20px;height:1px;background:#2a2a2a"></div><div class="a" style="left:20px;top:326.30px;width:1292.5px;height:1px;background:#9ca4b6"></div><div class="a" style="left:1312.5px;top:326.30px;width:49px;height:1px;background:#cfcfcf"></div><div class="a" style="left:0;top:326.30px;width:20px;height:1px;background:#2a2a2a"></div><div class="a" style="left:20px;top:337.80px;width:1292.5px;height:1px;background:#9ca4b6"></div><div class="a" style="left:1312.5px;top:337.80px;width:49px;height:1px;background:#cfcfcf"></div><div class="a" style="left:0;top:337.80px;width:20px;height:1px;background:#2a2a2a"></div><div class="a" style="left:20px;top:349.70px;width:1292.5px;height:1px;background:#9ca4b6"></div><div class="a" style="left:1312.5px;top:349.70px;width:49px;height:1px;background:#cfcfcf"></div><div class="a" style="left:0;top:349.70px;width:20px;height:1px;background:#2a2a2a"></div><div class="a" style="left:20px;top:361.60px;width:1292.5px;height:1px;background:#9ca4b6"></div><div class="a" style="left:1312.5px;top:361.60px;width:49px;height:1px;background:#cfcfcf"></div><div class="a" style="left:0;top:361.60px;width:20px;height:1px;background:#2a2a2a"></div><div class="a" style="left:20px;top:373.47px;width:1292.5px;height:1px;background:#9ca4b6"></div><div class="a" style="left:1312.5px;top:373.47px;width:49px;height:1px;background:#cfcfcf"></div><div class="a" style="left:0;top:373.47px;width:20px;height:1px;background:#2a2a2a"></div><div class="a" style="left:20px;top:385.33px;width:1292.5px;height:1px;background:#9ca4b6"></div><div class="a" style="left:1312.5px;top:385.33px;width:49px;height:1px;background:#cfcfcf"></div><div class="a" style="left:0;top:385.33px;width:20px;height:1px;background:#2a2a2a"></div><div class="a" style="left:20px;top:397.20px;width:1292.5px;height:1px;background:#9ca4b6"></div><div class="a" style="left:1312.5px;top:397.20px;width:49px;height:1px;background:#cfcfcf"></div><div class="a" style="left:0;top:397.20px;width:20px;height:1px;background:#2a2a2a"></div><div class="a" style="left:20px;top:409.03px;width:1292.5px;height:1px;background:#9ca4b6"></div><div class="a" style="left:1312.5px;top:409.03px;width:49px;height:1px;background:#cfcfcf"></div><div class="a" style="left:0;top:409.03px;width:20px;height:1px;background:#2a2a2a"></div><div class="a" style="left:20px;top:420.87px;width:1292.5px;height:1px;background:#9ca4b6"></div><div class="a" style="left:1312.5px;top:420.87px;width:49px;height:1px;background:#cfcfcf"></div><div class="a" style="left:0;top:420.87px;width:20px;height:1px;background:#2a2a2a"></div><div class="a" style="left:20px;top:432.70px;width:1292.5px;height:1px;background:#9ca4b6"></div><div class="a" style="left:1312.5px;top:432.70px;width:49px;height:1px;background:#cfcfcf"></div><div class="a" style="left:0;top:432.70px;width:20px;height:1px;background:#2a2a2a"></div><div class="a" style="left:20px;top:444.60px;width:1292.5px;height:1px;background:#9ca4b6"></div><div class="a" style="left:1312.5px;top:444.60px;width:49px;height:1px;background:#cfcfcf"></div><div class="a" style="left:0;top:444.60px;width:20px;height:1px;background:#2a2a2a"></div><div class="a" style="left:20px;top:456.50px;width:1292.5px;height:1px;background:#9ca4b6"></div><div class="a" style="left:1312.5px;top:456.50px;width:49px;height:1px;background:#cfcfcf"></div><div class="a" style="left:0;top:456.50px;width:20px;height:1px;background:#2a2a2a"></div><div class="a" style="left:20px;top:468.40px;width:1292.5px;height:1px;background:#9ca4b6"></div><div class="a" style="left:1312.5px;top:468.40px;width:49px;height:1px;background:#cfcfcf"></div><div class="a" style="left:0;top:468.40px;width:20px;height:1px;background:#2a2a2a"></div><div class="a" style="left:20px;top:480.23px;width:1292.5px;height:1px;background:#9ca4b6"></div><div class="a" style="left:1312.5px;top:480.23px;width:49px;height:1px;background:#cfcfcf"></div><div class="a" style="left:0;top:480.23px;width:20px;height:1px;background:#2a2a2a"></div><div class="a" style="left:20px;top:492.07px;width:1292.5px;height:1px;background:#9ca4b6"></div><div class="a" style="left:1312.5px;top:492.07px;width:49px;height:1px;background:#cfcfcf"></div><div class="a" style="left:0;top:492.07px;width:20px;height:1px;background:#2a2a2a"></div><div class="a" style="left:20px;top:503.90px;width:1292.5px;height:1px;background:#9ca4b6"></div><div class="a" style="left:1312.5px;top:503.90px;width:49px;height:1px;background:#cfcfcf"></div><div class="a" style="left:0;top:503.90px;width:20px;height:1px;background:#2a2a2a"></div><div class="a" style="left:20px;top:515.70px;width:1292.5px;height:1px;background:#9ca4b6"></div><div class="a" style="left:1312.5px;top:515.70px;width:49px;height:1px;background:#cfcfcf"></div><div class="a" style="left:0;top:515.70px;width:20px;height:1px;background:#2a2a2a"></div><div class="a" style="left:20px;top:527.50px;width:1292.5px;height:1px;background:#9ca4b6"></div><div class="a" style="left:1312.5px;top:527.50px;width:49px;height:1px;background:#cfcfcf"></div><div class="a" style="left:0;top:527.50px;width:20px;height:1px;background:#2a2a2a"></div><div class="a" style="left:20px;top:539.30px;width:1292.5px;height:1px;background:#9ca4b6"></div><div class="a" style="left:1312.5px;top:539.30px;width:49px;height:1px;background:#cfcfcf"></div><div class="a" style="left:0;top:539.30px;width:20px;height:1px;background:#2a2a2a"></div><div class="a" style="left:20px;top:551.20px;width:1292.5px;height:1px;background:#9ca4b6"></div><div class="a" style="left:1312.5px;top:551.20px;width:49px;height:1px;background:#cfcfcf"></div><div class="a" style="left:0;top:551.20px;width:20px;height:1px;background:#2a2a2a"></div><div class="a" style="left:20px;top:563.10px;width:1292.5px;height:1px;background:#9ca4b6"></div><div class="a" style="left:1312.5px;top:563.10px;width:49px;height:1px;background:#cfcfcf"></div><div class="a" style="left:0;top:563.10px;width:20px;height:1px;background:#2a2a2a"></div><div class="a" style="left:20px;top:575.00px;width:1292.5px;height:1px;background:#9ca4b6"></div><div class="a" style="left:1312.5px;top:575.00px;width:49px;height:1px;background:#cfcfcf"></div><div class="a" style="left:0;top:575.00px;width:20px;height:1px;background:#2a2a2a"></div><div class="a" style="left:89.2px;top:0;width:1px;height:600px;background:#b3b9c6"></div><div class="a" style="left:400.2px;top:0;width:1px;height:600px;background:#b3b9c6"></div><div class="a" style="left:494.4px;top:0;width:1px;height:600px;background:#b3b9c6"></div><div class="a" style="left:647.4px;top:0;width:1px;height:600px;background:#b3b9c6"></div><div class="a" style="left:741.6px;top:0;width:1px;height:600px;background:#b3b9c6"></div><div class="a" style="left:844.7px;top:0;width:1px;height:600px;background:#b3b9c6"></div><div class="a" style="left:1312.0px;top:0;width:1px;height:600px;background:#b3b9c6"></div><div class="a" style="left:1361.0px;top:0;width:1px;height:600px;background:#b3b9c6"></div><div class="a" style="left:20px;top:-5.50px;width:0;height:0;border-top:5px solid #4f8060;border-right:5px solid transparent"></div><div class="t" style="left:20.0px;width:69.7px;top:-3.30px;text-align:center">2866301</div><div class="t" style="left:91.7px;top:-3.30px;letter-spacing:-0.15px">3620 Hnnitoo Kosi Rarkianer bxt Sleek</div><div class="t" style="left:400.7px;width:89.2px;top:-3.30px;text-align:right">72,800,000</div><div class="t" style="left:494.9px;width:151.0px;top:-3.30px;text-align:right">37</div><div class="t" style="left:647.9px;width:91.2px;top:-3.30px;text-align:right">12,600,000</div><div class="t" style="left:742.1px;width:100.1px;top:-3.30px;text-align:right">$33.28</div><div class="rh" style="top:-2.40px">508</div><div class="a" style="left:20px;top:6.50px;width:0;height:0;border-top:5px solid #4f8060;border-right:5px solid transparent"></div><div class="t" style="left:20.0px;width:69.7px;top:8.70px;text-align:center">2868261</div><div class="t" style="left:91.7px;top:8.70px;letter-spacing:-0.15px">2097 Howessn Berhar-old Sloed</div><div class="t" style="left:400.7px;width:89.2px;top:8.70px;text-align:right">97,300,000</div><div class="t" style="left:494.9px;width:151.0px;top:8.70px;text-align:right">36</div><div class="t" style="left:647.9px;width:91.2px;top:8.70px;text-align:right">18,500,000</div><div class="t" style="left:742.1px;width:100.1px;top:8.70px;text-align:right">$35.44</div><div class="t" style="left:847.2px;top:8.70px">ARCHIVED", Agent ixora, visked amcaxilobiceos ptc.</div><div class="rh" style="top:9.60px">967</div><div class="a" style="left:20px;top:18.50px;width:0;height:0;border-top:5px solid #4f8060;border-right:5px solid transparent"></div><div class="t" style="left:20.0px;width:69.7px;top:20.70px;text-align:center">2000988</div><div class="t" style="left:91.7px;top:20.70px;letter-spacing:-0.15px">1117 Nura Kıoden mid Steat</div><div class="t" style="left:400.7px;width:89.2px;top:20.70px;text-align:right">79,000,000</div><div class="t" style="left:494.9px;width:151.0px;top:20.70px;text-align:right">17</div><div class="t" style="left:647.9px;width:91.2px;top:20.70px;text-align:right">19,300,008</div><div class="t" style="left:742.1px;width:100.1px;top:20.70px;text-align:right">$30.29</div><div class="rh" style="top:21.60px">302</div><div class="a" style="left:20px;top:30.50px;width:0;height:0;border-top:5px solid #4f8060;border-right:5px solid transparent"></div><div class="t" style="left:20.0px;width:69.7px;top:32.70px;text-align:center">2863087</div><div class="t" style="left:91.7px;top:32.70px;letter-spacing:-0.15px">6855 Docate Airamond Road</div><div class="t" style="left:400.7px;width:89.2px;top:32.70px;text-align:right">105,500,000</div><div class="t" style="left:494.9px;width:151.0px;top:32.70px;text-align:right">32</div><div class="t" style="left:647.9px;width:91.2px;top:32.70px;text-align:right">13,500,600</div><div class="t" style="left:742.1px;width:100.1px;top:32.70px;text-align:right">$36.28</div><div class="t" style="left:847.2px;top:32.70px">ARCHIVED", Asze obtweed, satishr at font vkivair</div><div class="rh" style="top:33.60px">509</div><div class="a" style="left:20px;top:42.50px;width:0;height:0;border-top:5px solid #4f8060;border-right:5px solid transparent"></div><div class="t" style="left:20.0px;width:69.7px;top:44.70px;text-align:center">2885238</div><div class="t" style="left:91.7px;top:44.70px;letter-spacing:-0.15px">5633 Campaii ikeaciar Goed</div><div class="t" style="left:400.7px;width:89.2px;top:44.70px;text-align:right">85,000,000</div><div class="t" style="left:494.9px;width:151.0px;top:44.70px;text-align:right">26</div><div class="t" style="left:647.9px;width:91.2px;top:44.70px;text-align:right">13,500,000</div><div class="t" style="left:742.1px;width:100.1px;top:44.70px;text-align:right">$36.37</div><div class="t" style="left:847.2px;top:44.70px">ARCHIVED", Asze obtweed, ralrelved a comrot per</div><div class="rh" style="top:45.60px">466</div><div class="a" style="left:20px;top:54.50px;width:0;height:0;border-top:5px solid #4f8060;border-right:5px solid transparent"></div><div class="t" style="left:20.0px;width:69.7px;top:56.70px;text-align:center">2806789</div><div class="t" style="left:91.7px;top:56.70px;letter-spacing:-0.15px">1352 Catomas fiesen't-Ronk</div><div class="t" style="left:400.7px;width:89.2px;top:56.70px;text-align:right">85,300,000</div><div class="t" style="left:494.9px;width:151.0px;top:56.70px;text-align:right">13</div><div class="t" style="left:647.9px;width:91.2px;top:56.70px;text-align:right">13,500,000</div><div class="t" style="left:742.1px;width:100.1px;top:56.70px;text-align:right">$35.46</div><div class="t" style="left:847.2px;top:56.70px">ARCHIVED"</div><div class="rh" style="top:57.60px">899</div><div class="a" style="left:20px;top:66.50px;width:0;height:0;border-top:5px solid #4f8060;border-right:5px solid transparent"></div><div class="t" style="left:20.0px;width:69.7px;top:68.70px;text-align:center">2003783</div><div class="t" style="left:91.7px;top:68.70px;letter-spacing:-0.15px">9057 Yaisenons Horarioa Riosd</div><div class="t" style="left:400.7px;width:89.2px;top:68.70px;text-align:right">73,600,000</div><div class="t" style="left:494.9px;width:151.0px;top:68.70px;text-align:right">17</div><div class="t" style="left:647.9px;width:91.2px;top:68.70px;text-align:right">18,500,009</div><div class="t" style="left:742.1px;width:100.1px;top:68.70px;text-align:right">$36.37</div><div class="t" style="left:847.2px;top:68.70px">ARCHIVED", Asze obtwsed, easshted birewn</div><div class="rh" style="top:69.60px">808</div><div class="a" style="left:20px;top:78.47px;width:0;height:0;border-top:5px solid #4f8060;border-right:5px solid transparent"></div><div class="t" style="left:20.0px;width:69.7px;top:80.67px;text-align:center">2888793</div><div class="t" style="left:91.7px;top:80.67px;letter-spacing:-0.15px">5833 Compunnernr lsk feal Estate Sireet</div><div class="t" style="left:400.7px;width:89.2px;top:80.67px;text-align:right">103,500,000</div><div class="t" style="left:494.9px;width:151.0px;top:80.67px;text-align:right">38</div><div class="t" style="left:647.9px;width:91.2px;top:80.67px;text-align:right">15,500,000</div><div class="t" style="left:742.1px;width:100.1px;top:80.67px;text-align:right">$28.55</div><div class="t" style="left:847.2px;top:80.67px">ARCHIVED", Asze obtweed, celrelved a somret per</div><div class="rh" style="top:81.58px">967</div><div class="a" style="left:20px;top:90.45px;width:0;height:0;border-top:5px solid #4f8060;border-right:5px solid transparent"></div><div class="t" style="left:20.0px;width:69.7px;top:92.65px;text-align:center">2882883</div><div class="t" style="left:91.7px;top:92.65px;letter-spacing:-0.15px">58264 Wiamastisa Mathert</div><div class="t" style="left:400.7px;width:89.2px;top:92.65px;text-align:right">52,800,000</div><div class="t" style="left:494.9px;width:151.0px;top:92.65px;text-align:right">39</div><div class="t" style="left:647.9px;width:91.2px;top:92.65px;text-align:right">20,500,000</div><div class="t" style="left:742.1px;width:100.1px;top:92.65px;text-align:right">$36.79</div><div class="t" style="left:847.2px;top:92.65px">ARCHIVED", Active asliına, sssause</div><div class="rh" style="top:93.55px">466</div><div class="a" style="left:20px;top:102.42px;width:0;height:0;border-top:5px solid #4f8060;border-right:5px solid transparent"></div><div class="t" style="left:20.0px;width:69.7px;top:104.62px;text-align:center">3882382</div><div class="t" style="left:91.7px;top:104.62px;letter-spacing:-0.15px">1334 Buttor Mauririonsoe Mirat</div><div class="t" style="left:400.7px;width:89.2px;top:104.62px;text-align:right">97,500,000</div><div class="t" style="left:494.9px;width:151.0px;top:104.62px;text-align:right">21</div><div class="t" style="left:647.9px;width:91.2px;top:104.62px;text-align:right">8,500,000</div><div class="t" style="left:742.1px;width:100.1px;top:104.62px;text-align:right">$34.57</div><div class="t" style="left:847.2px;top:104.62px">ARCHIVED", Asze obtweed, assolved a person</div><div class="rh" style="top:105.52px">469</div><div class="a" style="left:20px;top:114.40px;width:0;height:0;border-top:5px solid #4f8060;border-right:5px solid transparent"></div><div class="t" style="left:20.0px;width:69.7px;top:116.60px;text-align:center">2002681</div><div class="t" style="left:91.7px;top:116.60px;letter-spacing:-0.15px">1699 Uvs Sitcnhutie c.vin Birect</div><div class="t" style="left:400.7px;width:89.2px;top:116.60px;text-align:right">87,000,000</div><div class="t" style="left:494.9px;width:151.0px;top:116.60px;text-align:right">25</div><div class="t" style="left:647.9px;width:91.2px;top:116.60px;text-align:right">8,300,000</div><div class="t" style="left:742.1px;width:100.1px;top:116.60px;text-align:right">$26.75</div><div class="t" style="left:847.2px;top:116.60px">ARCHIVED", Asze obtweed, mxon seraverd saved carcss</div><div class="rh" style="top:117.50px">303</div><div class="a" style="left:20px;top:126.30px;width:0;height:0;border-top:5px solid #4f8060;border-right:5px solid transparent"></div><div class="t" style="left:20.0px;width:69.7px;top:128.50px;text-align:center">2867689</div><div class="t" style="left:91.7px;top:128.50px;letter-spacing:-0.15px">1472 S Lawselt Shemrrirri Riaen</div><div class="t" style="left:400.7px;width:89.2px;top:128.50px;text-align:right">77,500,000</div><div class="t" style="left:494.9px;width:151.0px;top:128.50px;text-align:right">15</div><div class="t" style="left:647.9px;width:91.2px;top:128.50px;text-align:right">9,500,000</div><div class="t" style="left:742.1px;width:100.1px;top:128.50px;text-align:right">$35.71</div><div class="t" style="left:847.2px;top:128.50px">ARCHIVED"</div><div class="rh" style="top:129.40px">501</div><div class="a" style="left:20px;top:138.20px;width:0;height:0;border-top:5px solid #4f8060;border-right:5px solid transparent"></div><div class="t" style="left:20.0px;width:69.7px;top:140.40px;text-align:center">2807800</div><div class="t" style="left:91.7px;top:140.40px;letter-spacing:-0.15px">4524038 Coyppcn hit Street</div><div class="t" style="left:400.7px;width:89.2px;top:140.40px;text-align:right">193,800,000</div><div class="t" style="left:494.9px;width:151.0px;top:140.40px;text-align:right">34</div><div class="t" style="left:647.9px;width:91.2px;top:140.40px;text-align:right">10,900,000</div><div class="t" style="left:742.1px;width:100.1px;top:140.40px;text-align:right">$15.23</div><div class="t" style="left:847.2px;top:140.40px">ARCHIVED"</div><div class="rh" style="top:141.30px">652</div><div class="a" style="left:20px;top:150.10px;width:0;height:0;border-top:5px solid #4f8060;border-right:5px solid transparent"></div><div class="t" style="left:20.0px;width:69.7px;top:152.30px;text-align:center">2862803</div><div class="t" style="left:91.7px;top:152.30px;letter-spacing:-0.15px">216335 Woomn tny hos PB Rivet</div><div class="t" style="left:400.7px;width:89.2px;top:152.30px;text-align:right">77,900,000</div><div class="t" style="left:494.9px;width:151.0px;top:152.30px;text-align:right">5</div><div class="t" style="left:647.9px;width:91.2px;top:152.30px;text-align:right">6,200,000</div><div class="t" style="left:742.1px;width:100.1px;top:152.30px;text-align:right">$13.65</div><div class="t" style="left:847.2px;top:152.30px">ARCHIVED"</div><div class="rh" style="top:153.20px">953</div><div class="a" style="left:20px;top:162.00px;width:0;height:0;border-top:5px solid #4f8060;border-right:5px solid transparent"></div><div class="t" style="left:20.0px;width:69.7px;top:164.20px;text-align:center">2802534</div><div class="t" style="left:91.7px;top:164.20px;letter-spacing:-0.15px">13527 Eevih snrivir Raue</div><div class="t" style="left:400.7px;width:89.2px;top:164.20px;text-align:right">103,600,000</div><div class="t" style="left:494.9px;width:151.0px;top:164.20px;text-align:right">13</div><div class="t" style="left:647.9px;width:91.2px;top:164.20px;text-align:right">8,506,000</div><div class="t" style="left:742.1px;width:100.1px;top:164.20px;text-align:right">$18.96</div><div class="t" style="left:847.2px;top:164.20px">ARCHIVED"</div><div class="rh" style="top:165.10px">402</div><div class="a" style="left:20px;top:173.90px;width:0;height:0;border-top:5px solid #4f8060;border-right:5px solid transparent"></div><div class="t" style="left:20.0px;width:69.7px;top:176.10px;text-align:center">2882609</div><div class="t" style="left:91.7px;top:176.10px;letter-spacing:-0.15px">4064872 Hors Marmont Road</div><div class="t" style="left:400.7px;width:89.2px;top:176.10px;text-align:right">84,200,000</div><div class="t" style="left:494.9px;width:151.0px;top:176.10px;text-align:right">13</div><div class="t" style="left:647.9px;width:91.2px;top:176.10px;text-align:right">9,200,000</div><div class="t" style="left:742.1px;width:100.1px;top:176.10px;text-align:right">$18.76</div><div class="t" style="left:847.2px;top:176.10px">ARCHIVED", Asze obtweed, aselved a fxanjvadis agent</div><div class="rh" style="top:177.00px">486</div><div class="a" style="left:20px;top:185.50px;width:0;height:0;border-top:5px solid #4f8060;border-right:5px solid transparent"></div><div class="t" style="left:20.0px;width:69.7px;top:187.70px;text-align:center">3802802</div><div class="t" style="left:91.7px;top:187.70px;letter-spacing:-0.15px">1693063 Genmusk Alt Rived</div><div class="t" style="left:400.7px;width:89.2px;top:187.70px;text-align:right">102,300,000</div><div class="t" style="left:494.9px;width:151.0px;top:187.70px;text-align:right">25</div><div class="t" style="left:647.9px;width:91.2px;top:187.70px;text-align:right">10,000,000</div><div class="t" style="left:742.1px;width:100.1px;top:187.70px;text-align:right">$25.95</div><div class="t" style="left:847.2px;top:187.70px">ARCHIVED", Asze obtweed, sexked a lrigh estort arisus</div><div class="rh" style="top:188.60px">409</div><div class="a" style="left:20px;top:196.90px;width:0;height:0;border-top:5px solid #4f8060;border-right:5px solid transparent"></div><div class="t" style="left:20.0px;width:69.7px;top:199.10px;text-align:center">3801894</div><div class="t" style="left:91.7px;top:199.10px;letter-spacing:-0.15px">651279/ Skaren Anands V8 Rived</div><div class="t" style="left:400.7px;width:89.2px;top:199.10px;text-align:right">103,200,000</div><div class="t" style="left:494.9px;width:151.0px;top:199.10px;text-align:right">16</div><div class="t" style="left:647.9px;width:91.2px;top:199.10px;text-align:right">7,600,009</div><div class="t" style="left:742.1px;width:100.1px;top:199.10px;text-align:right">$38.78</div><div class="t" style="left:847.2px;top:199.10px">ARCHIVED", Asze obtweed, strasening maon</div><div class="rh" style="top:200.00px">586</div><div class="a" style="left:20px;top:208.40px;width:0;height:0;border-top:5px solid #4f8060;border-right:5px solid transparent"></div><div class="t" style="left:20.0px;width:69.7px;top:210.60px;text-align:center">2831806</div><div class="t" style="left:91.7px;top:210.60px;letter-spacing:-0.15px">187226 Frontar Awsnea Als Road</div><div class="t" style="left:400.7px;width:89.2px;top:210.60px;text-align:right">104,800,000</div><div class="t" style="left:494.9px;width:151.0px;top:210.60px;text-align:right">27</div><div class="t" style="left:647.9px;width:91.2px;top:210.60px;text-align:right">12,300,000</div><div class="t" style="left:742.1px;width:100.1px;top:210.60px;text-align:right">$14.35</div><div class="t" style="left:847.2px;top:210.60px">ARCHOKED"</div><div class="rh" style="top:211.50px">409</div><div class="a" style="left:20px;top:220.10px;width:0;height:0;border-top:5px solid #4f8060;border-right:5px solid transparent"></div><div class="t" style="left:20.0px;width:69.7px;top:222.30px;text-align:center">3631778</div><div class="t" style="left:91.7px;top:222.30px;letter-spacing:-0.15px">187106 Stikot on B Road</div><div class="t" style="left:400.7px;width:89.2px;top:222.30px;text-align:right">54,500,000</div><div class="t" style="left:494.9px;width:151.0px;top:222.30px;text-align:right">7</div><div class="t" style="left:647.9px;width:91.2px;top:222.30px;text-align:right">3,500,000</div><div class="t" style="left:742.1px;width:100.1px;top:222.30px;text-align:right">$11.58</div><div class="t" style="left:847.2px;top:222.30px">ARCHIVED"</div><div class="rh" style="top:223.20px">489</div><div class="a" style="left:20px;top:232.10px;width:0;height:0;border-top:5px solid #4f8060;border-right:5px solid transparent"></div><div class="t" style="left:20.0px;width:69.7px;top:234.30px;text-align:center">4201803</div><div class="t" style="left:91.7px;top:234.30px;letter-spacing:-0.15px">181351620 Gulamon Road</div><div class="t" style="left:400.7px;width:89.2px;top:234.30px;text-align:right">152,300,000</div><div class="t" style="left:494.9px;width:151.0px;top:234.30px;text-align:right">13</div><div class="t" style="left:647.9px;width:91.2px;top:234.30px;text-align:right">8,500,000</div><div class="t" style="left:742.1px;width:100.1px;top:234.30px;text-align:right">$25.64</div><div class="t" style="left:847.2px;top:234.30px">ARCHIVED", Asze obtweed, ensarkss with a mondocate nedin</div><div class="rh" style="top:235.20px">400</div><div class="a" style="left:20px;top:244.10px;width:0;height:0;border-top:5px solid #4f8060;border-right:5px solid transparent"></div><div class="t" style="left:20.0px;width:69.7px;top:246.30px;text-align:center">3509697</div><div class="t" style="left:91.7px;top:246.30px;letter-spacing:-0.15px">1379557 Sb Lasnehosioe Sift Roed</div><div class="t" style="left:400.7px;width:89.2px;top:246.30px;text-align:right">106,000,000</div><div class="t" style="left:494.9px;width:151.0px;top:246.30px;text-align:right">8</div><div class="t" style="left:647.9px;width:91.2px;top:246.30px;text-align:right">8,200,000</div><div class="t" style="left:742.1px;width:100.1px;top:246.30px;text-align:right">$36.84</div><div class="t" style="left:847.2px;top:246.30px">ARCHIVED", Asze aboluis a compen</div><div class="rh" style="top:247.20px">891</div><div class="a" style="left:20px;top:255.80px;width:0;height:0;border-top:5px solid #4f8060;border-right:5px solid transparent"></div><div class="t" style="left:20.0px;width:69.7px;top:258.00px;text-align:center">3830807</div><div class="t" style="left:91.7px;top:258.00px;letter-spacing:-0.15px">1417559/W Swsoiiurene MeX Road</div><div class="t" style="left:400.7px;width:89.2px;top:258.00px;text-align:right">139,000,000</div><div class="t" style="left:494.9px;width:151.0px;top:258.00px;text-align:right">23</div><div class="t" style="left:647.9px;width:91.2px;top:258.00px;text-align:right">12,500,000</div><div class="t" style="left:742.1px;width:100.1px;top:258.00px;text-align:right">$30.45</div><div class="t" style="left:847.2px;top:258.00px">ARCHIVED", Asze obtweed, ieaces aa cl nis:mdorn alvargon</div><div class="rh" style="top:258.90px">881</div><div class="a" style="left:20px;top:267.67px;width:0;height:0;border-top:5px solid #4f8060;border-right:5px solid transparent"></div><div class="t" style="left:20.0px;width:69.7px;top:269.87px;text-align:center">3632602</div><div class="t" style="left:91.7px;top:269.87px;letter-spacing:-0.15px">1824297Nsw bean brıtatnt Pd Rond</div><div class="t" style="left:400.7px;width:89.2px;top:269.87px;text-align:right">34,200,000</div><div class="t" style="left:494.9px;width:151.0px;top:269.87px;text-align:right">5</div><div class="t" style="left:647.9px;width:91.2px;top:269.87px;text-align:right">8,500,006</div><div class="t" style="left:742.1px;width:100.1px;top:269.87px;text-align:right">$16.37</div><div class="t" style="left:847.2px;top:269.87px">ARCHIVED", Asze obtweed, seanen tranting tine elew</div><div class="rh" style="top:270.77px">589</div><div class="a" style="left:20px;top:279.53px;width:0;height:0;border-top:5px solid #4f8060;border-right:5px solid transparent"></div><div class="t" style="left:20.0px;width:69.7px;top:281.73px;text-align:center">3522080</div><div class="t" style="left:91.7px;top:281.73px;letter-spacing:-0.15px">201961 son Angeiv Sivrehmd Strent</div><div class="t" style="left:400.7px;width:89.2px;top:281.73px;text-align:right">85,300,000</div><div class="t" style="left:494.9px;width:151.0px;top:281.73px;text-align:right">5</div><div class="t" style="left:647.9px;width:91.2px;top:281.73px;text-align:right">8,500,000</div><div class="t" style="left:742.1px;width:100.1px;top:281.73px;text-align:right">$11.54</div><div class="t" style="left:847.2px;top:281.73px">ARCHIVED"</div><div class="rh" style="top:282.63px">905</div><div class="a" style="left:20px;top:291.40px;width:0;height:0;border-top:5px solid #4f8060;border-right:5px solid transparent"></div><div class="t" style="left:20.0px;width:69.7px;top:293.60px;text-align:center">3922609</div><div class="t" style="left:91.7px;top:293.60px;letter-spacing:-0.15px">2260497 Sto Loon tien Nixit</div><div class="t" style="left:400.7px;width:89.2px;top:293.60px;text-align:right">106,000,000</div><div class="t" style="left:494.9px;width:151.0px;top:293.60px;text-align:right">16</div><div class="t" style="left:647.9px;width:91.2px;top:293.60px;text-align:right">8,300,000</div><div class="t" style="left:742.1px;width:100.1px;top:293.60px;text-align:right">$17.86</div><div class="t" style="left:847.2px;top:293.60px">ARCHIVED", Asze obtweed, custclethwand aiftein</div><div class="rh" style="top:294.50px">385</div><div class="a" style="left:20px;top:303.37px;width:0;height:0;border-top:5px solid #4f8060;border-right:5px solid transparent"></div><div class="t" style="left:20.0px;width:69.7px;top:305.57px;text-align:center">3816301</div><div class="t" style="left:91.7px;top:305.57px;letter-spacing:-0.15px">231787 Westmemar Acroesit Rivzal</div><div class="t" style="left:400.7px;width:89.2px;top:305.57px;text-align:right">85,500,000</div><div class="t" style="left:494.9px;width:151.0px;top:305.57px;text-align:right">3</div><div class="t" style="left:647.9px;width:91.2px;top:305.57px;text-align:right">3,600,600</div><div class="t" style="left:742.1px;width:100.1px;top:305.57px;text-align:right">$14.35</div><div class="t" style="left:847.2px;top:305.57px">ARCHIOED", Asze obtweed, ematarre ellneeure</div><div class="rh" style="top:306.47px">299</div><div class="a" style="left:20px;top:315.33px;width:0;height:0;border-top:5px solid #4f8060;border-right:5px solid transparent"></div><div class="t" style="left:20.0px;width:69.7px;top:317.53px;text-align:center">2536981</div><div class="t" style="left:91.7px;top:317.53px;letter-spacing:-0.15px">1422863 K Surgh Ablanext River</div><div class="t" style="left:400.7px;width:89.2px;top:317.53px;text-align:right">100,600,000</div><div class="t" style="left:494.9px;width:151.0px;top:317.53px;text-align:right">17</div><div class="t" style="left:647.9px;width:91.2px;top:317.53px;text-align:right">11,000,000</div><div class="t" style="left:742.1px;width:100.1px;top:317.53px;text-align:right">$18.26</div><div class="t" style="left:847.2px;top:317.53px">ARCHIVED", Asze obtweed, seanen avoid erdooel</div><div class="rh" style="top:318.43px">966</div><div class="a" style="left:20px;top:327.30px;width:0;height:0;border-top:5px solid #4f8060;border-right:5px solid transparent"></div><div class="t" style="left:20.0px;width:69.7px;top:329.50px;text-align:center">3630660</div><div class="t" style="left:91.7px;top:329.50px;letter-spacing:-0.15px">442255/A/Ao Sebotocale Row..</div><div class="t" style="left:400.7px;width:89.2px;top:329.50px;text-align:right">105,800,000</div><div class="t" style="left:494.9px;width:151.0px;top:329.50px;text-align:right">25</div><div class="t" style="left:647.9px;width:91.2px;top:329.50px;text-align:right">9,500,000</div><div class="t" style="left:742.1px;width:100.1px;top:329.50px;text-align:right">$35.25</div><div class="t" style="left:847.2px;top:329.50px">ARCHIVED", Asze obtweed, seonle urelukea kian</div><div class="rh" style="top:330.40px">567</div><div class="a" style="left:20px;top:338.80px;width:0;height:0;border-top:5px solid #4f8060;border-right:5px solid transparent"></div><div class="t" style="left:20.0px;width:69.7px;top:341.00px;text-align:center">9036602</div><div class="t" style="left:91.7px;top:341.00px;letter-spacing:-0.15px">90149 Dors Lard ioendsxine Silrt</div><div class="t" style="left:400.7px;width:89.2px;top:341.00px;text-align:right">99,000,000</div><div class="t" style="left:494.9px;width:151.0px;top:341.00px;text-align:right">3</div><div class="t" style="left:647.9px;width:91.2px;top:341.00px;text-align:right">3,300,000</div><div class="t" style="left:742.1px;width:100.1px;top:341.00px;text-align:right">$26.35</div><div class="t" style="left:847.2px;top:341.00px">ARCHIVED", Asze obtweed, concose a whine kamp-troat</div><div class="rh" style="top:341.90px">308</div><div class="a" style="left:20px;top:350.70px;width:0;height:0;border-top:5px solid #4f8060;border-right:5px solid transparent"></div><div class="t" style="left:20.0px;width:69.7px;top:352.90px;text-align:center">2528078</div><div class="t" style="left:91.7px;top:352.90px;letter-spacing:-0.15px">2535333 Meat Westerıon Riend</div><div class="t" style="left:400.7px;width:89.2px;top:352.90px;text-align:right">135,200,000</div><div class="t" style="left:494.9px;width:151.0px;top:352.90px;text-align:right">12</div><div class="t" style="left:647.9px;width:91.2px;top:352.90px;text-align:right">5,500,000</div><div class="t" style="left:742.1px;width:100.1px;top:352.90px;text-align:right">$36.56</div><div class="t" style="left:847.2px;top:352.90px">ARCHIVED", Asze obtwees</div><div class="rh" style="top:353.80px">309</div><div class="a" style="left:20px;top:362.60px;width:0;height:0;border-top:5px solid #4f8060;border-right:5px solid transparent"></div><div class="t" style="left:20.0px;width:69.7px;top:364.80px;text-align:center">2333665</div><div class="t" style="left:91.7px;top:364.80px;letter-spacing:-0.15px">69142 Risoondxan-lors Mant</div><div class="t" style="left:400.7px;width:89.2px;top:364.80px;text-align:right">125,500,000</div><div class="t" style="left:494.9px;width:151.0px;top:364.80px;text-align:right">3</div><div class="t" style="left:647.9px;width:91.2px;top:364.80px;text-align:right">3,600,009</div><div class="t" style="left:742.1px;width:100.1px;top:364.80px;text-align:right">$45.32</div><div class="t" style="left:847.2px;top:364.80px">ARCHIVED", Asze obtweed, ventiss-d aerise deenweune</div><div class="rh" style="top:365.70px">366</div><div class="a" style="left:20px;top:374.47px;width:0;height:0;border-top:5px solid #4f8060;border-right:5px solid transparent"></div><div class="t" style="left:20.0px;width:69.7px;top:376.67px;text-align:center">3526461</div><div class="t" style="left:91.7px;top:376.67px;letter-spacing:-0.15px">148363 Mi Arsncır suoon Orl Dor..</div><div class="t" style="left:400.7px;width:89.2px;top:376.67px;text-align:right">87,800,000</div><div class="t" style="left:494.9px;width:151.0px;top:376.67px;text-align:right">15</div><div class="t" style="left:647.9px;width:91.2px;top:376.67px;text-align:right">3,500,000</div><div class="t" style="left:742.1px;width:100.1px;top:376.67px;text-align:right">$15.44</div><div class="t" style="left:847.2px;top:376.67px">ARCHIVED", Asze obtweed, sanbfiued ratalls</div><div class="rh" style="top:377.57px">567</div><div class="a" style="left:20px;top:386.33px;width:0;height:0;border-top:5px solid #4f8060;border-right:5px solid transparent"></div><div class="t" style="left:20.0px;width:69.7px;top:388.53px;text-align:center">5533499</div><div class="t" style="left:91.7px;top:388.53px;letter-spacing:-0.15px">1339618I/Borrerzon Appnine Moost 8d</div><div class="t" style="left:400.7px;width:89.2px;top:388.53px;text-align:right">89,300,000</div><div class="t" style="left:494.9px;width:151.0px;top:388.53px;text-align:right">3</div><div class="t" style="left:647.9px;width:91.2px;top:388.53px;text-align:right">8,309,009</div><div class="t" style="left:742.1px;width:100.1px;top:388.53px;text-align:right">$16.95</div><div class="t" style="left:847.2px;top:388.53px">ARCHIVED", Asze obtweed, coanon a swar</div><div class="rh" style="top:389.43px">206</div><div class="a" style="left:20px;top:398.20px;width:0;height:0;border-top:5px solid #4f8060;border-right:5px solid transparent"></div><div class="t" style="left:20.0px;width:69.7px;top:400.40px;text-align:center">3526789</div><div class="t" style="left:91.7px;top:400.40px;letter-spacing:-0.15px">3317869 Hickemabon Soin Ricer</div><div class="t" style="left:400.7px;width:89.2px;top:400.40px;text-align:right">177,500,000</div><div class="t" style="left:494.9px;width:151.0px;top:400.40px;text-align:right">11</div><div class="t" style="left:647.9px;width:91.2px;top:400.40px;text-align:right">4,500,000</div><div class="t" style="left:742.1px;width:100.1px;top:400.40px;text-align:right">$28.32</div><div class="t" style="left:847.2px;top:400.40px">ARCHIVED", Asze obtweed, coanr ler a quatle motting</div><div class="rh" style="top:401.30px">867</div><div class="a" style="left:20px;top:410.03px;width:0;height:0;border-top:5px solid #4f8060;border-right:5px solid transparent"></div><div class="t" style="left:20.0px;width:69.7px;top:412.23px;text-align:center">3625750</div><div class="t" style="left:91.7px;top:412.23px;letter-spacing:-0.15px">1387873 Watt Boernains Frd Itexd</div><div class="t" style="left:400.7px;width:89.2px;top:412.23px;text-align:right">122,000,000</div><div class="t" style="left:494.9px;width:151.0px;top:412.23px;text-align:right">5</div><div class="t" style="left:647.9px;width:91.2px;top:412.23px;text-align:right">4,500,000</div><div class="t" style="left:742.1px;width:100.1px;top:412.23px;text-align:right">$18.33</div><div class="t" style="left:847.2px;top:412.23px">ARCHIVED", Asze obtweed, puildoo a weeks and long core</div><div class="rh" style="top:413.13px">366</div><div class="a" style="left:20px;top:421.87px;width:0;height:0;border-top:5px solid #4f8060;border-right:5px solid transparent"></div><div class="t" style="left:20.0px;width:69.7px;top:424.07px;text-align:center">3626284</div><div class="t" style="left:91.7px;top:424.07px;letter-spacing:-0.15px">233674 Nvs horrinorour Ricod</div><div class="t" style="left:400.7px;width:89.2px;top:424.07px;text-align:right">175,300,000</div><div class="t" style="left:494.9px;width:151.0px;top:424.07px;text-align:right">8</div><div class="t" style="left:647.9px;width:91.2px;top:424.07px;text-align:right">3,600,000</div><div class="t" style="left:742.1px;width:100.1px;top:424.07px;text-align:right">$15.65</div><div class="t" style="left:847.2px;top:424.07px">ARCHIVED", Asze obtweed, echor an anaaxing</div><div class="rh" style="top:424.97px">309</div><div class="a" style="left:20px;top:433.70px;width:0;height:0;border-top:5px solid #4f8060;border-right:5px solid transparent"></div><div class="t" style="left:20.0px;width:69.7px;top:435.90px;text-align:center">5636500</div><div class="t" style="left:91.7px;top:435.90px;letter-spacing:-0.15px">25435309 West Oorpmioen Raxd</div><div class="t" style="left:400.7px;width:89.2px;top:435.90px;text-align:right">168,000,000</div><div class="t" style="left:494.9px;width:151.0px;top:435.90px;text-align:right">3</div><div class="t" style="left:647.9px;width:91.2px;top:435.90px;text-align:right">8,300,000</div><div class="t" style="left:742.1px;width:100.1px;top:435.90px;text-align:right">$19.37</div><div class="t" style="left:847.2px;top:435.90px">ARCHIVED"</div><div class="rh" style="top:436.80px">309</div><div class="a" style="left:20px;top:445.60px;width:0;height:0;border-top:5px solid #4f8060;border-right:5px solid transparent"></div><div class="t" style="left:20.0px;width:69.7px;top:447.80px;text-align:center">3636460</div><div class="t" style="left:91.7px;top:447.80px;letter-spacing:-0.15px">531367 Yelnary Neruallims Rived</div><div class="t" style="left:400.7px;width:89.2px;top:447.80px;text-align:right">168,500,000</div><div class="t" style="left:494.9px;width:151.0px;top:447.80px;text-align:right">23</div><div class="t" style="left:647.9px;width:91.2px;top:447.80px;text-align:right">9,500,000</div><div class="t" style="left:742.1px;width:100.1px;top:447.80px;text-align:right">$26.65</div><div class="t" style="left:847.2px;top:447.80px">ARCHIVED", Asze obtweed, puralse, aserotin ws scorted here</div><div class="rh" style="top:448.70px">400</div><div class="a" style="left:20px;top:457.50px;width:0;height:0;border-top:5px solid #4f8060;border-right:5px solid transparent"></div><div class="t" style="left:20.0px;width:69.7px;top:459.70px;text-align:center">3626702</div><div class="t" style="left:91.7px;top:459.70px;letter-spacing:-0.15px">28120640 Arbarnooo Aranca tour..</div><div class="t" style="left:400.7px;width:89.2px;top:459.70px;text-align:right">112,900,000</div><div class="t" style="left:494.9px;width:151.0px;top:459.70px;text-align:right">3</div><div class="t" style="left:647.9px;width:91.2px;top:459.70px;text-align:right">3,500,000</div><div class="t" style="left:742.1px;width:100.1px;top:459.70px;text-align:right">$18.89</div><div class="t" style="left:847.2px;top:459.70px">ARCHIVED"</div><div class="rh" style="top:460.60px">401</div><div class="a" style="left:20px;top:469.40px;width:0;height:0;border-top:5px solid #4f8060;border-right:5px solid transparent"></div><div class="t" style="left:20.0px;width:69.7px;top:471.60px;text-align:center">3658709</div><div class="t" style="left:91.7px;top:471.60px;letter-spacing:-0.15px">383334Rl-uvrsemse-ledr Breen</div><div class="t" style="left:400.7px;width:89.2px;top:471.60px;text-align:right">125,500,000</div><div class="t" style="left:494.9px;width:151.0px;top:471.60px;text-align:right">12</div><div class="t" style="left:647.9px;width:91.2px;top:471.60px;text-align:right">6,200,000</div><div class="t" style="left:742.1px;width:100.1px;top:471.60px;text-align:right">$18.36</div><div class="t" style="left:847.2px;top:471.60px">ARCHIVED", Asze elibhase</div><div class="rh" style="top:472.50px">852</div><div class="a" style="left:20px;top:481.23px;width:0;height:0;border-top:5px solid #4f8060;border-right:5px solid transparent"></div><div class="t" style="left:20.0px;width:69.7px;top:483.43px;text-align:center">4030988</div><div class="t" style="left:91.7px;top:483.43px;letter-spacing:-0.15px">28127 Mso Mois Rona Noad</div><div class="t" style="left:400.7px;width:89.2px;top:483.43px;text-align:right">123,000,000</div><div class="t" style="left:494.9px;width:151.0px;top:483.43px;text-align:right">13</div><div class="t" style="left:647.9px;width:91.2px;top:483.43px;text-align:right">4,300,000</div><div class="t" style="left:742.1px;width:100.1px;top:483.43px;text-align:right">$19.35</div><div class="t" style="left:847.2px;top:483.43px">ARCHIVED"</div><div class="rh" style="top:484.33px">402</div><div class="a" style="left:20px;top:493.07px;width:0;height:0;border-top:5px solid #4f8060;border-right:5px solid transparent"></div><div class="t" style="left:20.0px;width:69.7px;top:495.27px;text-align:center">3636883</div><div class="t" style="left:91.7px;top:495.27px;letter-spacing:-0.15px">228697 EM Vkeoncos Ras 6m Artxart</div><div class="t" style="left:400.7px;width:89.2px;top:495.27px;text-align:right">178,800,000</div><div class="t" style="left:494.9px;width:151.0px;top:495.27px;text-align:right">20</div><div class="t" style="left:647.9px;width:91.2px;top:495.27px;text-align:right">9,500,000</div><div class="t" style="left:742.1px;width:100.1px;top:495.27px;text-align:right">$18.56</div><div class="t" style="left:847.2px;top:495.27px">ARCHIVED"</div><div class="rh" style="top:496.17px">405</div><div class="a" style="left:20px;top:504.90px;width:0;height:0;border-top:5px solid #4f8060;border-right:5px solid transparent"></div><div class="t" style="left:20.0px;width:69.7px;top:507.10px;text-align:center">3526837</div><div class="t" style="left:91.7px;top:507.10px;letter-spacing:-0.15px">4812313 Tiasas Skorxer Sold</div><div class="t" style="left:400.7px;width:89.2px;top:507.10px;text-align:right">200,600,000</div><div class="t" style="left:494.9px;width:151.0px;top:507.10px;text-align:right">3</div><div class="t" style="left:647.9px;width:91.2px;top:507.10px;text-align:right">3,300,000</div><div class="t" style="left:742.1px;width:100.1px;top:507.10px;text-align:right">$17.72</div><div class="t" style="left:847.2px;top:507.10px">ARCHIVED", Asze ootweed, scanoed medica elitlesohata</div><div class="rh" style="top:508.00px">405</div><div class="a" style="left:20px;top:516.70px;width:0;height:0;border-top:5px solid #4f8060;border-right:5px solid transparent"></div><div class="t" style="left:20.0px;width:69.7px;top:518.90px;text-align:center">3658878</div><div class="t" style="left:91.7px;top:518.90px;letter-spacing:-0.15px">14383533 Harin Mcstrtevelishe Bleind</div><div class="t" style="left:400.7px;width:89.2px;top:518.90px;text-align:right">255,000,000</div><div class="t" style="left:494.9px;width:151.0px;top:518.90px;text-align:right">11</div><div class="t" style="left:647.9px;width:91.2px;top:518.90px;text-align:right">3,500,000</div><div class="t" style="left:742.1px;width:100.1px;top:518.90px;text-align:right">$15.65</div><div class="t" style="left:847.2px;top:518.90px">ARCHIVED", Asse adtweax, euper sua avebier formo</div><div class="rh" style="top:519.80px">882</div><div class="a" style="left:20px;top:528.50px;width:0;height:0;border-top:5px solid #4f8060;border-right:5px solid transparent"></div><div class="t" style="left:20.0px;width:69.7px;top:530.70px;text-align:center">4026979</div><div class="t" style="left:91.7px;top:530.70px;letter-spacing:-0.15px">2028322 N Caaranona Adınm</div><div class="t" style="left:400.7px;width:89.2px;top:530.70px;text-align:right">213,900,000</div><div class="t" style="left:494.9px;width:151.0px;top:530.70px;text-align:right">15</div><div class="t" style="left:647.9px;width:91.2px;top:530.70px;text-align:right">8,300,600</div><div class="t" style="left:742.1px;width:100.1px;top:530.70px;text-align:right">$29.32</div><div class="t" style="left:847.2px;top:530.70px">ARCHIVED", Asse obtweea, irstaced a rsailing towmar</div><div class="rh" style="top:531.60px">423</div><div class="a" style="left:20px;top:540.30px;width:0;height:0;border-top:5px solid #4f8060;border-right:5px solid transparent"></div><div class="t" style="left:20.0px;width:69.7px;top:542.50px;text-align:center">3636882</div><div class="t" style="left:91.7px;top:542.50px;letter-spacing:-0.15px">11437 09sliMeene Str Wirom Coropt</div><div class="t" style="left:400.7px;width:89.2px;top:542.50px;text-align:right">258,600,000</div><div class="t" style="left:494.9px;width:151.0px;top:542.50px;text-align:right">11</div><div class="t" style="left:647.9px;width:91.2px;top:542.50px;text-align:right">8,300,000</div><div class="t" style="left:742.1px;width:100.1px;top:542.50px;text-align:right">$16.32</div><div class="t" style="left:847.2px;top:542.50px">ARCHIVED", Asse oltivvea, ocvaned ele-scalived</div><div class="rh" style="top:543.40px">486</div><div class="a" style="left:20px;top:552.20px;width:0;height:0;border-top:5px solid #4f8060;border-right:5px solid transparent"></div><div class="t" style="left:20.0px;width:69.7px;top:554.40px;text-align:center">3628386</div><div class="t" style="left:91.7px;top:554.40px;letter-spacing:-0.15px">42123 Mark Calrselvn Mof Sexe</div><div class="t" style="left:400.7px;width:89.2px;top:554.40px;text-align:right">33,800,000</div><div class="t" style="left:494.9px;width:151.0px;top:554.40px;text-align:right">20</div><div class="t" style="left:647.9px;width:91.2px;top:554.40px;text-align:right">3,200,000</div><div class="t" style="left:742.1px;width:100.1px;top:554.40px;text-align:right">$25.56</div><div class="t" style="left:847.2px;top:554.40px">ARCHIVED", Asse oliıvved, sesucornd-ineoto waner infainten</div><div class="rh" style="top:555.30px">487</div><div class="a" style="left:20px;top:564.10px;width:0;height:0;border-top:5px solid #4f8060;border-right:5px solid transparent"></div><div class="t" style="left:20.0px;width:69.7px;top:566.30px;text-align:center">3858858</div><div class="t" style="left:91.7px;top:566.30px;letter-spacing:-0.15px">5583 Rarcuanloen Sintr Stiel</div><div class="t" style="left:400.7px;width:89.2px;top:566.30px;text-align:right">333,800,000</div><div class="t" style="left:494.9px;width:151.0px;top:566.30px;text-align:right">21</div><div class="t" style="left:647.9px;width:91.2px;top:566.30px;text-align:right">3,500,000</div><div class="t" style="left:742.1px;width:100.1px;top:566.30px;text-align:right">$13.13</div><div class="t" style="left:847.2px;top:566.30px">ARCHIVED", Asse olitwved, sesucornd-ineoto</div><div class="rh" style="top:567.20px">488</div></div><div class="a" style="left:0;top:138.6px;width:1362px;height:14px;background:#121212"></div><div class="a" style="left:845.2px;top:138.6px;width:467.3px;height:14px;background:#6c6c6c;border-bottom:1.5px solid #2f6f6a"></div><div class="t" style="left:20.0px;width:69.7px;top:141px;text-align:center;font-size:10.5px;color:#d8d8d8">A</div><div class="a" style="left:89.2px;top:139px;width:1px;height:13.6px;background:#333"></div><div class="t" style="left:89.7px;width:311.0px;top:141px;text-align:center;font-size:10.5px;color:#d8d8d8">B</div><div class="a" style="left:400.2px;top:139px;width:1px;height:13.6px;background:#333"></div><div class="t" style="left:400.7px;width:94.2px;top:141px;text-align:center;font-size:10.5px;color:#d8d8d8">C</div><div class="a" style="left:494.4px;top:139px;width:1px;height:13.6px;background:#333"></div><div class="t" style="left:494.9px;width:153.0px;top:141px;text-align:center;font-size:10.5px;color:#d8d8d8">D</div><div class="a" style="left:647.4px;top:139px;width:1px;height:13.6px;background:#333"></div><div class="t" style="left:647.9px;width:94.2px;top:141px;text-align:center;font-size:10.5px;color:#d8d8d8">E</div><div class="a" style="left:741.6px;top:139px;width:1px;height:13.6px;background:#333"></div><div class="t" style="left:742.1px;width:103.1px;top:141px;text-align:center;font-size:10.5px;color:#d8d8d8">F</div><div class="a" style="left:844.7px;top:139px;width:1px;height:13.6px;background:#333"></div><div class="t" style="left:845.2px;width:467.3px;top:141px;text-align:center;font-size:10.5px;color:#d8d8d8">G</div><div class="a" style="left:1312.0px;top:139px;width:1px;height:13.6px;background:#333"></div><div class="t" style="left:1312.5px;width:49.0px;top:141px;text-align:center;font-size:10.5px;color:#d8d8d8">H</div><div class="a" style="left:1361.0px;top:139px;width:1px;height:13.6px;background:#333"></div><div class="a" style="left:6px;top:143px;width:0;height:0;border-bottom:9px solid #5a5a5a;border-left:11px solid transparent"></div><div class="a" style="left:20px;top:152.6px;width:1292.5px;height:14.8px;background:#3f6cbf"></div><div class="a" style="left:1312.5px;top:152.6px;width:49.0px;height:14.8px;background:#fdfdfd;border-bottom:1px solid #b0b0b0"></div><div class="a" style="left:0;top:152.6px;width:20px;height:14.8px;background:#111"></div><div class="rh" style="top:155.5px;font-size:10px;color:#cfcfcf">1</div><div class="t" style="left:22.5px;top:155.1px;font-size:12px;font-weight:bold;color:#fff">MLS_ID</div><div class="a" style="left:77.7px;top:155.6px;width:11px;height:11px;background:#f4f4f4;border:1px solid #c9d3e8"></div><div class="a" style="left:80.7px;top:159.8px;width:0;height:0;border-top:3px solid #333;border-left:2.5px solid transparent;border-right:2.5px solid transparent"></div><div class="t" style="left:92.2px;top:155.1px;font-size:12px;font-weight:bold;color:#fff">Address</div><div class="a" style="left:388.7px;top:155.6px;width:11px;height:11px;background:#f4f4f4;border:1px solid #c9d3e8"></div><div class="a" style="left:391.7px;top:159.8px;width:0;height:0;border-top:3px solid #333;border-left:2.5px solid transparent;border-right:2.5px solid transparent"></div><div class="t" style="left:403.2px;top:155.1px;font-size:12px;font-weight:bold;color:#fff">List_Price</div><div class="a" style="left:482.9px;top:155.6px;width:11px;height:11px;background:#f4f4f4;border:1px solid #c9d3e8"></div><div class="a" style="left:485.9px;top:159.8px;width:0;height:0;border-top:3px solid #333;border-left:2.5px solid transparent;border-right:2.5px solid transparent"></div><div class="t" style="left:497.4px;top:155.1px;font-size:12px;font-weight:bold;color:#fff">Days_on_Market</div><div class="a" style="left:635.9px;top:155.6px;width:11px;height:11px;background:#f4f4f4;border:1px solid #c9d3e8"></div><div class="a" style="left:638.9px;top:159.8px;width:0;height:0;border-top:3px solid #333;border-left:2.5px solid transparent;border-right:2.5px solid transparent"></div><div class="t" style="left:650.4px;top:155.1px;font-size:12px;font-weight:bold;color:#fff">Sold_Price</div><div class="a" style="left:730.1px;top:155.6px;width:11px;height:11px;background:#f4f4f4;border:1px solid #c9d3e8"></div><div class="a" style="left:733.1px;top:159.8px;width:0;height:0;border-top:3px solid #333;border-left:2.5px solid transparent;border-right:2.5px solid transparent"></div><div class="t" style="left:744.6px;top:155.1px;font-size:12px;font-weight:bold;color:#fff">Price_Per_SqFt</div><div class="a" style="left:833.2px;top:155.6px;width:11px;height:11px;background:#f4f4f4;border:1px solid #c9d3e8"></div><div class="a" style="left:836.2px;top:159.8px;width:0;height:0;border-top:3px solid #333;border-left:2.5px solid transparent;border-right:2.5px solid transparent"></div><div class="t" style="left:847.7px;top:155.1px;font-size:12px;font-weight:bold;color:#fff">Agent_Notes</div><div class="a" style="left:1300.5px;top:155.6px;width:11px;height:11px;background:#f4f4f4;border:1px solid #c9d3e8"></div><div class="a" style="left:1303.5px;top:159.8px;width:0;height:0;border-top:3px solid #333;border-left:2.5px solid transparent;border-right:2.5px solid transparent"></div><div class="a" style="left:1362px;top:138px;width:14px;height:600px;background:#1b1b1b"></div><div class="a" style="left:1365px;top:191px;width:8px;height:13px;background:#505050;border-radius:1px"></div><div class="t" style="left:1364px;top:140px;font-size:7px;color:#888">&#9650;</div><div class="t" style="left:1364px;top:731px;font-size:7px;color:#888">&#9660;</div></div><div class="a" style="left:0;top:0;width:1376px;height:41px;background:#0c0c0c"></div><svg class="a" style="left:7.5px;top:4px" width="11" height="11"><rect x="0.5" y="0.5" width="10" height="10" rx="1" fill="#2f9a58"/><path d="M2 2 L9 9 M9 2 L2 9" stroke="#9fe0b0" stroke-width="1.6"/></svg><div class="t" style="left:24.5px;top:4.5px;font-size:9.5px;color:#a0a0a0;letter-spacing:-0.612px;">AutoSave</div><div class="a" style="left:64px;top:3.3px;width:27.2px;height:12.3px;border:1.3px solid #6a6a6a;border-radius:7px"></div><div class="a" style="left:67px;top:5.2px;width:7.5px;height:8.5px;background:#6f6f6f;border-radius:50%"></div><div class="t" style="left:77.0px;top:5.5px;font-size:7.0px;color:#6f6f6f;font-weight:bold">Off</div><div class="a" style="left:101px;top:4px;width:11px;height:11px;border:1.4px solid #a46bd6;border-radius:1.5px;background:#2a1b35"></div><div class="a" style="left:104px;top:9px;width:5px;height:4px;border:1px solid #a46bd6"></div><svg class="a" style="left:119px;top:3px" width="50" height="14" viewBox="0 0 50 14"><path d="M3 4 Q7 1 10 4 Q12 7 8 12" fill="none" stroke="#ddd" stroke-width="1.3"/><path d="M2 3 L3 6 L6 5" fill="none" stroke="#ddd" stroke-width="1.2"/><path d="M17 8 L19 10 L21 8" fill="none" stroke="#ccc" stroke-width="1"/><path d="M39 4 Q35 1 32 4 Q30 7 34 12" fill="none" stroke="#555" stroke-width="1.3"/><path d="M44 8 L45.5 9.5 L47 8" fill="none" stroke="#555" stroke-width="1"/></svg><div class="t" style="left:176.5px;top:5.0px;font-size:8.0px;color:#ccc;">&#8801;</div><div class="t" style="left:267.0px;top:4.6px;font-size:9.5px;color:#dedede;white-space:pre;letter-spacing:-0.732px;">RealEstate_Analysis_2023_Master_v14.xlsx  ·  Excel</div><svg class="a" style="left:458px;top:6.5px" width="8" height="6"><path d="M1 1.5 L4 4.5 L7 1.5" fill="none" stroke="#ddd" stroke-width="1.2"/></svg><div class="a" style="left:542px;top:0px;width:315px;height:17.5px;background:#262626;border-radius:0 0 4px 4px"></div><svg class="a" style="left:554px;top:3px" width="12" height="12"><circle cx="7" cy="5" r="3.4" fill="none" stroke="#aaa" stroke-width="1.1"/><path d="M4.5 7.5 L1.5 10.5" stroke="#aaa" stroke-width="1.2"/></svg><div class="t" style="left:574.3px;top:5.3px;font-size:9.3px;color:#a8a8a8;letter-spacing:-0.295px;">Search</div><div class="t" style="left:1158.1px;top:5.0px;font-size:9.5px;color:#dcdcdc;letter-spacing:-0.062px;">Algivs edbion</div><div class="a" style="left:1220px;top:1.5px;width:16px;height:16px;border-radius:50%;background:#9b9b9b"></div><div class="a" style="left:1225px;top:6.5px;width:6px;height:6px;border-radius:50%;border:1px solid #c8c8c8"></div><svg class="a" style="left:1253px;top:3px" width="15" height="14"><path d="M3 12 L7 2 L12 4 L9 12 Z M5 8 L10 9 M6 5 L11 6" fill="none" stroke="#ddd" stroke-width="1.1"/></svg><div class="a" style="left:1289.5px;top:9.5px;width:8.5px;height:1px;background:#ddd"></div><div class="a" style="left:1323px;top:6px;width:7px;height:7px;border:1px solid #ddd;border-radius:1px"></div><div class="a" style="left:1325px;top:4px;width:7px;height:7px;border-top:1px solid #ddd;border-right:1px solid #ddd"></div><svg class="a" style="left:1355px;top:5px" width="10" height="10"><path d="M1 1 L9 9 M9 1 L1 9" stroke="#ddd" stroke-width="1.1"/></svg><div class="t" style="left:12.3px;top:27.2px;font-size:9.6px;color:#e8e8e8;letter-spacing:-0.267px;">File</div><div class="t" style="left:46.3px;top:27.2px;font-size:9.6px;color:#e8e8e8;letter-spacing:-0.068px;font-weight:bold;">Home</div><div class="t" style="left:87.5px;top:27.2px;font-size:9.6px;color:#e8e8e8;letter-spacing:0.032px;">Insert</div><div class="t" style="left:127.5px;top:27.2px;font-size:9.6px;color:#e8e8e8;letter-spacing:-0.219px;">Page Layout</div><div class="t" style="left:194.3px;top:27.2px;font-size:9.6px;color:#e8e8e8;letter-spacing:-0.101px;">Formulas</div><div class="t" style="left:249.2px;top:27.2px;font-size:9.6px;color:#e8e8e8;letter-spacing:-0.245px;">Data</div><div class="t" style="left:284.5px;top:27.2px;font-size:9.6px;color:#e8e8e8;letter-spacing:-0.280px;">Review</div><div class="t" style="left:329.0px;top:27.2px;font-size:9.6px;color:#e8e8e8;letter-spacing:-0.034px;">View</div><div class="t" style="left:364.9px;top:27.2px;font-size:9.6px;color:#e8e8e8;letter-spacing:-0.036px;">Help</div><div class="t" style="left:400.2px;top:27.2px;font-size:9.6px;color:#e8e8e8;letter-spacing:-0.084px;">Power Pivot</div><div class="t" style="left:465.1px;top:27.2px;font-size:9.6px;color:#e8e8e8;letter-spacing:-0.107px;">Developer</div><div class="a" style="left:46.5px;top:38.3px;width:26px;height:1.6px;background:#4aa66a;border-radius:1px"></div><div class="a" style="left:1258.5px;top:23px;width:46px;height:16px;background:#242424;border:1px solid #4a4a4a;border-radius:3px"></div><svg class="a" style="left:1263px;top:27px" width="10" height="9"><path d="M1 1 H9 V6 H4 L2 8 V6 H1 Z" fill="none" stroke="#ddd" stroke-width="1"/></svg><div class="t" style="left:1275.0px;top:26.5px;font-size:9.5px;color:#eee;">Share</div><div class="a" style="left:1311.5px;top:23px;width:56px;height:16px;background:#5cb868;border-radius:3px"></div><svg class="a" style="left:1315px;top:26px" width="11" height="10"><path d="M1 9 V5 H3 V9 Z M3 5 L6 1 L7 2 L6 4 H9 L8 9 H3" fill="none" stroke="#1d4a26" stroke-width="1"/></svg><div class="t" style="left:1327.0px;top:26.5px;font-size:9.5px;color:#143d1c;">Share</div><svg class="a" style="left:1357px;top:29px" width="7" height="5"><path d="M1 1 L3.5 3.5 L6 1" fill="none" stroke="#1d4a26" stroke-width="1"/></svg><div class="a" style="left:0;top:41px;width:1372px;height:67.5px;background:#262626;border-radius:0 0 6px 0"></div><div class="a" style="left:117.3px;top:45px;width:1px;height:60px;background:#3c3c3c"></div><div class="a" style="left:275.4px;top:45px;width:1px;height:60px;background:#3c3c3c"></div><div class="a" style="left:475.2px;top:45px;width:1px;height:60px;background:#3c3c3c"></div><div class="a" style="left:584.7px;top:45px;width:1px;height:60px;background:#3c3c3c"></div><div class="a" style="left:1015.4px;top:45px;width:1px;height:60px;background:#3c3c3c"></div><div class="a" style="left:1115.5px;top:45px;width:1px;height:60px;background:#3c3c3c"></div><div class="a" style="left:1259.6px;top:45px;width:1px;height:60px;background:#3c3c3c"></div><div class="a" style="left:1300.5px;top:45px;width:1px;height:60px;background:#3c3c3c"></div><div class="a" style="left:373.6px;top:49px;width:1px;height:40px;background:#3a3a3a"></div><div class="t" style="left:-7.5px;width:120px;top:98.5px;font-size:9.0px;color:#d0d0d0;text-align:center;">Clipbeard</div><div class="t" style="left:130.6px;width:120px;top:98.5px;font-size:9.0px;color:#d0d0d0;text-align:center;">Font</div><div class="t" style="left:309.5px;width:120px;top:98.5px;font-size:9.0px;color:#d0d0d0;text-align:center;">Alignment</div><div class="t" style="left:464.0px;width:120px;top:98.5px;font-size:9.0px;color:#d0d0d0;text-align:center;">Humber</div><div class="t" style="left:739.4px;width:120px;top:98.5px;font-size:9.0px;color:#d0d0d0;text-align:center;">Stylss</div><div class="t" style="left:1005.5px;width:120px;top:98.5px;font-size:9.0px;color:#d0d0d0;text-align:center;">Calls</div><div class="t" style="left:1127.0px;width:120px;top:98.5px;font-size:9.0px;color:#d0d0d0;text-align:center;">Editing</div><div class="t" style="left:1219.6px;width:120px;top:98.5px;font-size:9.0px;color:#d0d0d0;text-align:center;">Tools</div><svg class="a" style="left:109.0px;top:99px" width="8" height="8"><path d="M1 1 V7 H7 M3.5 3.5 L7 7 M7 4 V7 H4" fill="none" stroke="#aaa" stroke-width="0.9"/></svg><svg class="a" style="left:268.5px;top:99px" width="8" height="8"><path d="M1 1 V7 H7 M3.5 3.5 L7 7 M7 4 V7 H4" fill="none" stroke="#aaa" stroke-width="0.9"/></svg><svg class="a" style="left:468.0px;top:99px" width="8" height="8"><path d="M1 1 V7 H7 M3.5 3.5 L7 7 M7 4 V7 H4" fill="none" stroke="#aaa" stroke-width="0.9"/></svg><svg class="a" style="left:576.5px;top:99px" width="8" height="8"><path d="M1 1 V7 H7 M3.5 3.5 L7 7 M7 4 V7 H4" fill="none" stroke="#aaa" stroke-width="0.9"/></svg><svg class="a" style="left:10px;top:46px" width="23" height="24"><path d="M9 2.5 H3 Q1.5 2.5 1.5 4 V19.5 Q1.5 21 3 21 H10" fill="none" stroke="#c9a15e" stroke-width="2"/><path d="M12 2.5 H15.5 Q17 2.5 17 4 V8" fill="none" stroke="#c9a15e" stroke-width="2"/><rect x="6" y="1" width="6" height="3.5" rx="1" fill="#d8c49a"/><rect x="11" y="9.5" width="10" height="12.5" fill="#262626" stroke="#c4c4c4" stroke-width="1.1"/></svg><div class="t" style="left:9.3px;top:72.0px;font-size:9.5px;color:#e8e8e8;letter-spacing:-0.719px;">Paste</div><svg class="a" style="left:16px;top:85px" width="7" height="5"><path d="M1 1 L3.5 3.5 L6 1" fill="none" stroke="#ccc" stroke-width="1"/></svg><svg class="a" style="left:38px;top:47px" width="12" height="12"><path d="M4 1 L7 8 M8 1 L5 8" stroke="#cfcfcf" stroke-width="1"/><circle cx="4" cy="9.5" r="2" fill="none" stroke="#4a90d9" stroke-width="1.1"/><circle cx="8" cy="9.5" r="2" fill="none" stroke="#4a90d9" stroke-width="1.1"/></svg><div class="t" style="left:51.1px;top:48.5px;font-size:9.5px;color:#e6e6e6;letter-spacing:0.005px;">Cut</div><svg class="a" style="left:37px;top:64px" width="13" height="12"><rect x="1" y="1" width="7" height="9" fill="none" stroke="#bbb" stroke-width="1"/><rect x="4.5" y="3" width="7" height="8.5" fill="#262626" stroke="#bbb" stroke-width="1"/></svg><div class="t" style="left:51.1px;top:66.0px;font-size:9.5px;color:#e6e6e6;letter-spacing:-0.320px;">Copy</div><svg class="a" style="left:79px;top:69px" width="7" height="5"><path d="M1 1 L3.5 3.5 L6 1" fill="none" stroke="#ccc" stroke-width="1"/></svg><svg class="a" style="left:37.5px;top:82px" width="13" height="12"><path d="M1 7 L7 1.5 L12 4 L6 10.5 Z" fill="#d9b48a"/><path d="M7 1.5 L12 4 L10 6.5 L5.5 4 Z" fill="#8a8a8a"/><path d="M2 8 L5 11" stroke="#b86a3a" stroke-width="1.5"/></svg><div class="t" style="left:51.1px;top:82.5px;font-size:9.5px;color:#e6e6e6;letter-spacing:-0.438px;">Format Painter</div><div class="a" style="left:123.4px;top:49.2px;width:79.4px;height:16.2px;border:1px solid #5a5a5a;border-radius:2px;background:#262626"></div><div class="t" style="left:125.5px;top:52.5px;font-size:9.5px;color:#e6e6e6;">Calibri</div><svg class="a" style="left:195px;top:55.5px" width="6" height="4"><path d="M0.5 0.5 L3 3 L5.5 0.5" fill="#ddd" stroke="#ddd" stroke-width="0.8"/></svg><div class="a" style="left:204.8px;top:49.2px;width:30.5px;height:16.2px;border:1px solid #606060;border-radius:2px;background:#242424"></div><div class="t" style="left:207.0px;top:52.5px;font-size:9.5px;color:#e6e6e6;">11</div><svg class="a" style="left:228px;top:55.5px" width="6" height="4"><path d="M0.5 0.5 L3 3 L5.5 0.5" fill="none" stroke="#ddd" stroke-width="0.9"/></svg><div class="t" style="left:239.5px;top:50.5px;font-size:11.5px;color:#dcdcdc;">A<sup style="font-size:5px">^</sup></div><div class="t" style="left:257.0px;top:52.0px;font-size:10.0px;color:#dcdcdc;">A<sup style="font-size:5px">v</sup></div><div class="t" style="left:127.5px;top:74.5px;font-size:10.5px;color:#eee;font-weight:bold">B</div><div class="t" style="left:146.0px;top:74.5px;font-size:10.5px;color:#ddd;font-style:italic;font-family:&quot;Liberation Serif&quot;,serif">I</div><div class="t" style="left:162.0px;top:74.5px;font-size:10.0px;color:#ddd;text-decoration:underline">U</div><svg class="a" style="left:176.0px;top:78.5px" width="6" height="4"><path d="M0.5 0.5 L3 3 L5.5 0.5" fill="none" stroke="#ccc" stroke-width="0.9"/></svg><svg class="a" style="left:206.0px;top:78.5px" width="6" height="4"><path d="M0.5 0.5 L3 3 L5.5 0.5" fill="none" stroke="#ccc" stroke-width="0.9"/></svg><svg class="a" style="left:236.0px;top:78.5px" width="6" height="4"><path d="M0.5 0.5 L3 3 L5.5 0.5" fill="none" stroke="#ccc" stroke-width="0.9"/></svg><svg class="a" style="left:262.5px;top:78.5px" width="6" height="4"><path d="M0.5 0.5 L3 3 L5.5 0.5" fill="none" stroke="#ccc" stroke-width="0.9"/></svg><svg class="a" style="left:188.5px;top:73.5px" width="13" height="13"><rect x="1" y="1" width="11" height="11" fill="none" stroke="#cfcfcf" stroke-width="1"/><path d="M6.5 1 V12 M1 6.5 H12" stroke="#cfcfcf" stroke-width="0.9" stroke-dasharray="1.4 0.8"/></svg><div class="a" style="left:185px;top:72px;width:1px;height:15px;background:#444"></div><div class="a" style="left:215.5px;top:73px;width:1px;height:14px;background:#444"></div><svg class="a" style="left:219px;top:73px" width="14" height="15"><path d="M3 7 L7 3 L11 7 L7 11 Z" fill="none" stroke="#ddd" stroke-width="1.1"/><rect x="1" y="11.5" width="12" height="3" fill="#e5d93a"/></svg><svg class="a" style="left:245px;top:72px" width="14" height="16"><path d="M3 10 L7 2 L11 10 M4.5 7 H9.5" fill="none" stroke="#ddd" stroke-width="1.1"/><rect x="1" y="11.5" width="12" height="3.5" rx="1" fill="#d0262e"/></svg><svg class="a" style="left:270px;top:40px" width="200" height="60"><path d="M14.5 11.5 H24.4" stroke="#d4d4d4" stroke-width="1.0"/><path d="M14.5 13.9 H24.4" stroke="#d4d4d4" stroke-width="1.0"/><path d="M14.5 16.5 H24.4" stroke="#d4d4d4" stroke-width="1.0"/><path d="M31.3 14.5 H41.2" stroke="#d4d4d4" stroke-width="1.0"/><path d="M31.3 17.1 H41.2" stroke="#d4d4d4" stroke-width="1.0"/><path d="M31.3 20.0 H41.2" stroke="#d4d4d4" stroke-width="1.0"/><rect x="46.0" y="9.2" width="15.5" height="16.5" rx="1" fill="#3a3a3a" stroke="#8a8a8a" stroke-width="1"/><path d="M49.2 17.8 H58.8" stroke="#bdbdbd" stroke-width="1.0"/><path d="M49.2 20.6 H58.8" stroke="#bdbdbd" stroke-width="1.0"/><path d="M69.5 22.5 L79.5 12.5 M69.0 15.0 L73.0 12.0 L77.0 16.0" fill="none" stroke="#d8d8d8" stroke-width="1"/><path d="M70.0 18.0 L74.0 22.0" stroke="#d8d8d8" stroke-width="1"/><path d="M14.5 35.2 H24.4" stroke="#d4d4d4" stroke-width="1.0"/><path d="M31.3 35.2 H41.2" stroke="#d4d4d4" stroke-width="1.0"/><path d="M48.5 35.2 H59.5" stroke="#d4d4d4" stroke-width="1.0"/><path d="M14.5 37.9 H21.5" stroke="#d4d4d4" stroke-width="1.0"/><path d="M32.8 37.9 H39.7" stroke="#d4d4d4" stroke-width="1.0"/><path d="M51.5 37.9 H59.5" stroke="#d4d4d4" stroke-width="1.0"/><path d="M14.5 40.9 H24.4" stroke="#d4d4d4" stroke-width="1.0"/><path d="M31.3 40.9 H41.2" stroke="#d4d4d4" stroke-width="1.0"/><path d="M48.5 40.9 H59.5" stroke="#d4d4d4" stroke-width="1.0"/><path d="M14.5 44.0 H21.5" stroke="#d4d4d4" stroke-width="1.0"/><path d="M32.8 44.0 H39.7" stroke="#d4d4d4" stroke-width="1.0"/><path d="M51.5 44.0 H59.5" stroke="#d4d4d4" stroke-width="1.0"/><path d="M64.9 30.5 V47.3" stroke="#3c3c3c" stroke-width="1"/><path d="M68.7 35.2 H80.2" stroke="#c8d4e0" stroke-width="1.0"/><path d="M68.7 44.0 H80.2" stroke="#c8d4e0" stroke-width="1.0"/><path d="M73.7 38.3 H80.2" stroke="#8fb8dc" stroke-width="1.0"/><path d="M73.7 41.0 H80.2" stroke="#8fb8dc" stroke-width="1.0"/><path d="M72.2 37.5 L69.7 39.6 L72.2 41.7" fill="none" stroke="#8fb8dc" stroke-width="0.9"/><path d="M86.3 35.2 H97.8" stroke="#c8d4e0" stroke-width="1.0"/><path d="M86.3 44.0 H97.8" stroke="#c8d4e0" stroke-width="1.0"/><path d="M91.3 38.3 H97.8" stroke="#8fb8dc" stroke-width="1.0"/><path d="M91.3 41.0 H97.8" stroke="#8fb8dc" stroke-width="1.0"/><path d="M89.8 37.5 L87.3 39.6 L89.8 41.7" fill="none" stroke="#8fb8dc" stroke-width="0.9"/><rect x="111.5" y="13.0" width="9" height="10" rx="3" fill="none" stroke="#c8c8c8" stroke-width="1" stroke-dasharray="1.6 1.1"/><path d="M113.5 18.0 H118.5" stroke="#d8d8d8" stroke-width="1"/><rect x="110.2" y="33.8" width="11" height="11.5" fill="#2a4766" stroke="#7fa6cc" stroke-width="1"/><path d="M112.0 37.0 H120.0 M112.0 42.5 H120.0" stroke="#b8d0e8" stroke-width="0.9" stroke-dasharray="1.2 1"/></svg><svg class="a" style="left:352.5px;top:55.5px" width="6" height="4"><path d="M0.5 0.5 L3 3 L5.5 0.5" fill="none" stroke="#ccc" stroke-width="0.9"/></svg><div class="t" style="left:393.2px;top:53.5px;font-size:9.5px;color:#e6e6e6;letter-spacing:-0.457px;">Wrap Text</div><div class="t" style="left:393.2px;top:75.5px;font-size:9.5px;color:#e6e6e6;letter-spacing:-0.411px;">Merge &amp; Center</div><svg class="a" style="left:461px;top:78.5px" width="6" height="4"><path d="M0.5 0.5 L3 3 L5.5 0.5" fill="none" stroke="#ccc" stroke-width="0.9"/></svg><div class="a" style="left:481px;top:49.4px;width:98.6px;height:16.1px;border:1px solid #606060;border-radius:2px;background:#242424"></div><div class="t" style="left:483.5px;top:53.0px;font-size:9.2px;color:#e6e6e6;">Genesal</div><svg class="a" style="left:572px;top:56px" width="6" height="4"><path d="M0.5 0.5 L3 3 L5.5 0.5" fill="none" stroke="#ddd" stroke-width="0.9"/></svg><div class="t" style="left:484.5px;top:73.5px;font-size:11.5px;color:#e6e6e6;">$</div><svg class="a" style="left:499px;top:79px" width="6" height="4"><path d="M0.5 0.5 L3 3 L5.5 0.5" fill="none" stroke="#ccc" stroke-width="0.9"/></svg><div class="t" style="left:509.0px;top:73.5px;font-size:11.5px;color:#e6e6e6;">%</div><div class="t" style="left:530.0px;top:72.0px;font-size:14.0px;color:#e6e6e6;font-weight:bold">&#8218;</div><div class="a" style="left:543px;top:72px;width:1px;height:15px;background:#3c3c3c"></div><svg class="a" style="left:547px;top:73px" width="14" height="13"><path d="M2 9 L5 6" stroke="#6aa8d8" stroke-width="1.2"/><text x="6" y="7" font-size="6" fill="#aaa" font-family="Liberation Sans">.0</text><text x="6" y="12.5" font-size="6" fill="#aaa" font-family="Liberation Sans">00</text></svg><svg class="a" style="left:564px;top:73px" width="14" height="13"><path d="M2 9 L5 6" stroke="#6aa8d8" stroke-width="1.2"/><text x="6" y="7" font-size="6" fill="#aaa" font-family="Liberation Sans">00</text><text x="6" y="12.5" font-size="6" fill="#aaa" font-family="Liberation Sans">.0</text></svg><svg class="a" style="left:606px;top:47px" width="23" height="20"><rect x="1" y="1" width="21" height="18" fill="none" stroke="#c8c8c8" stroke-width="1"/><rect x="2" y="2" width="13" height="5" fill="#d9344a"/><rect x="2" y="8" width="13" height="4" fill="#d9344a"/><rect x="2" y="13" width="13" height="5" fill="#e56e7e"/><path d="M15 1 V19 M1 7.5 H22 M1 12.5 H22" stroke="#c8c8c8" stroke-width="0.8"/></svg><div class="t" style="left:556.3px;width:120px;top:71.5px;font-size:9.5px;color:#e6e6e6;text-align:center;">Conditional</div><div class="t" style="left:556.3px;width:120px;top:82.8px;font-size:9.5px;color:#e6e6e6;text-align:center;">Formatting&#9662;</div><svg class="a" style="left:656px;top:47px" width="24" height="21"><rect x="1" y="1" width="20" height="17" fill="none" stroke="#c8c8c8" stroke-width="1"/><path d="M1 6 H21 M1 11 H21 M7 1 V18 M14 1 V18" stroke="#c8c8c8" stroke-width="0.8"/><path d="M7 7 H16 L14 19 H9 Z" fill="#3f9ad6"/><path d="M17 16 L23 8" stroke="#ddd" stroke-width="1.2"/></svg><div class="t" style="left:607.3px;width:120px;top:71.5px;font-size:9.5px;color:#e6e6e6;text-align:center;">Format at</div><div class="t" style="left:607.3px;width:120px;top:82.8px;font-size:9.5px;color:#e6e6e6;text-align:center;">Tsble&#9662;</div><div class="a" style="left:694.8px;top:48.8px;width:314px;height:41.8px;border:1px solid #3e3e3e;border-radius:2px;background:#1e1e1e"></div><div class="a" style="left:697.3px;top:50.6px;width:71.5px;height:17px;background:#ffffff;border:1px solid #3a3a3a;border-radius:1px"></div><div class="t" style="left:701.3px;top:55.0px;font-size:9.3px;color:#111;font-weight:bold">Normal</div><div class="a" style="left:773.9px;top:50.6px;width:71.5px;height:17px;background:#f4bcc4;border:1px solid #3a3a3a;border-radius:1px"></div><div class="t" style="left:777.9px;top:55.0px;font-size:9.3px;color:#8a2a2e;">Seil</div><div class="a" style="left:848.6px;top:50.6px;width:71.5px;height:17px;background:#f4dd88;border:1px solid #3a3a3a;border-radius:1px"></div><div class="t" style="left:852.6px;top:55.0px;font-size:9.3px;color:#5a4a10;">Red</div><div class="a" style="left:923.8px;top:50.6px;width:71.5px;height:17px;background:#b3e2ae;border:1px solid #3a3a3a;border-radius:1px"></div><div class="t" style="left:927.8px;top:55.0px;font-size:9.3px;color:#2f6a2f;">Conoleced</div><div class="a" style="left:697.3px;top:71.2px;width:71.5px;height:17px;background:#acacac;border:1px solid #3a3a3a;border-radius:1px"></div><div class="t" style="left:701.3px;top:75.6px;font-size:9.3px;color:#eee;">Normal</div><div class="a" style="left:773.9px;top:71.2px;width:71.5px;height:17px;background:#e3a46c;border:1px solid #3a3a3a;border-radius:1px"></div><div class="t" style="left:777.9px;top:75.6px;font-size:9.3px;color:#fbe3cc;">Booanlfecicnt &#305;lt.</div><div class="a" style="left:848.6px;top:71.2px;width:71.5px;height:17px;background:#ffffff;border:1px solid #3a3a3a;border-radius:1px"></div><div class="t" style="left:852.6px;top:75.6px;font-size:9.3px;color:#b08060;">Sendeoties (J...</div><div class="a" style="left:923.8px;top:71.2px;width:71.5px;height:17px;background:#6e6e6e;border:1px solid #3a3a3a;border-radius:1px"></div><div class="t" style="left:927.8px;top:75.6px;font-size:9.3px;color:#eee;font-style:italic;font-weight:bold">Other</div><div class="a" style="left:998.4px;top:48.8px;width:10px;height:12px;border:1px solid #444;background:#262626"></div><div class="a" style="left:998.4px;top:62.6px;width:10px;height:12px;border:1px solid #444;background:#262626"></div><div class="a" style="left:998.4px;top:76.3px;width:10px;height:12px;border:1px solid #444;background:#262626"></div><svg class="a" style="left:1024.0px;top:47px" width="24" height="20"><rect x="1" y="3" width="21" height="15" fill="#1d3c66" stroke="#c8c8c8" stroke-width="1"/><path d="M1 8 H22 M1 13 H22" stroke="#5aa0e0" stroke-width="1" stroke-dasharray="2 1"/></svg><svg class="a" style="left:1054.7px;top:47px" width="24" height="20"><rect x="1" y="3" width="21" height="15" fill="#1d3c66" stroke="#c8c8c8" stroke-width="1"/><path d="M1 8 H22 M1 13 H22" stroke="#5aa0e0" stroke-width="1" stroke-dasharray="2 1"/><path d="M15 6 L21 13 M21 6 L15 13" stroke="#e07050" stroke-width="1.5"/></svg><svg class="a" style="left:1085px;top:45px" width="23" height="22"><path d="M5 2 H17" stroke="#c8c8c8" stroke-width="1"/><rect x="1" y="4" width="20" height="16" fill="#1d3c66" stroke="#c8c8c8" stroke-width="1.2"/><rect x="5" y="8" width="12" height="8" fill="#3f86c6"/></svg><div class="t" style="left:1024.0px;top:72.0px;font-size:9.5px;color:#e6e6e6;letter-spacing:-0.210px;">Invert</div><svg class="a" style="left:1032.4px;top:85px" width="6" height="4"><path d="M0.5 0.5 L3 3 L5.5 0.5" fill="none" stroke="#ccc" stroke-width="0.9"/></svg><div class="t" style="left:1053.5px;top:72.0px;font-size:9.5px;color:#e6e6e6;letter-spacing:-0.577px;">Delete</div><svg class="a" style="left:1062.5px;top:85px" width="6" height="4"><path d="M0.5 0.5 L3 3 L5.5 0.5" fill="none" stroke="#ccc" stroke-width="0.9"/></svg><div class="t" style="left:1081.5px;top:72.0px;font-size:9.5px;color:#e6e6e6;letter-spacing:-0.515px;">Format</div><svg class="a" style="left:1092.0px;top:85px" width="6" height="4"><path d="M0.5 0.5 L3 3 L5.5 0.5" fill="none" stroke="#ccc" stroke-width="0.9"/></svg><div class="t" style="left:1125.0px;top:46.0px;font-size:11.5px;color:#e0e0e0;">&#931;</div><div class="t" style="left:1137.1px;top:47.8px;font-size:9.5px;color:#e6e6e6;letter-spacing:-0.383px;">AutoSum</div><svg class="a" style="left:1179px;top:51px" width="6" height="4"><path d="M0.5 0.5 L3 3 L5.5 0.5" fill="#ddd" stroke="#ddd" stroke-width="0.8"/></svg><div class="a" style="left:1125.5px;top:63.5px;width:9px;height:9px;border:1px solid #aaa;background:#2a4d78"></div><div class="t" style="left:1137.1px;top:65.0px;font-size:9.5px;color:#e6e6e6;letter-spacing:0.016px;">Fill</div><svg class="a" style="left:1150px;top:68px" width="6" height="4"><path d="M0.5 0.5 L3 3 L5.5 0.5" fill="#ddd" stroke="#ddd" stroke-width="0.8"/></svg><svg class="a" style="left:1123px;top:81px" width="13" height="12"><path d="M1 7 L7 1 L12 5 L6 11 Z" fill="#b46ad6"/><path d="M4 7 L8 4" stroke="#eee" stroke-width="0.8"/></svg><div class="t" style="left:1137.1px;top:83.2px;font-size:9.5px;color:#e6e6e6;letter-spacing:-0.381px;">Clear</div><svg class="a" style="left:1160px;top:86px" width="6" height="4"><path d="M0.5 0.5 L3 3 L5.5 0.5" fill="#ddd" stroke="#ddd" stroke-width="0.8"/></svg><svg class="a" style="left:1193px;top:45px" width="24" height="23"><path d="M2 10 L5 2 L8 10 M3 7 H7" fill="none" stroke="#4a90e0" stroke-width="1.1"/><path d="M2 13 H8 L2 21 H8" fill="none" stroke="#ddd" stroke-width="1.1"/><path d="M10 7 H22 L17.5 13 V19 L14.5 17 V13 Z" fill="none" stroke="#ddd" stroke-width="1.1"/></svg><div class="t" style="left:1191.3px;top:72.0px;font-size:9.5px;color:#e6e6e6;letter-spacing:-0.100px;">Sort &amp;</div><div class="t" style="left:1191.3px;top:83.0px;font-size:9.5px;color:#e6e6e6;letter-spacing:-0.235px;">Filter</div><svg class="a" style="left:1212.5px;top:87.0px" width="6" height="4"><path d="M0.5 0.5 L3 3 L5.5 0.5" fill="none" stroke="#ddd" stroke-width="0.9"/></svg><svg class="a" style="left:1225px;top:45px" width="22" height="23"><circle cx="13" cy="9" r="7" fill="none" stroke="#ddd" stroke-width="1.2"/><path d="M8 14 L2 21" stroke="#ddd" stroke-width="1.3"/></svg><div class="t" style="left:1223.5px;top:72.0px;font-size:9.5px;color:#e6e6e6;letter-spacing:-0.076px;">Find &amp;</div><div class="t" style="left:1221.9px;top:83.0px;font-size:9.5px;color:#e6e6e6;letter-spacing:-0.467px;">Select</div><svg class="a" style="left:1247.0px;top:87.0px" width="6" height="4"><path d="M0.5 0.5 L3 3 L5.5 0.5" fill="none" stroke="#ddd" stroke-width="0.9"/></svg><svg class="a" style="left:1269px;top:46px" width="23" height="22"><rect x="1" y="1" width="21" height="20" fill="#3a3a30" stroke="#aaa" stroke-width="1"/><circle cx="11.5" cy="11" r="5" fill="none" stroke="#e8d870" stroke-width="1.6"/><path d="M3 4 H7 M16 4 H20 M3 18 H7 M16 18 H20" stroke="#888" stroke-width="0.8"/></svg><div class="t" style="left:1266.5px;top:72.0px;font-size:9.5px;color:#e6e6e6;letter-spacing:-0.618px;">Fowwe</div><svg class="a" style="left:1362px;top:100px" width="9" height="6"><path d="M1 5 L4.5 1.5 L8 5" fill="none" stroke="#ddd" stroke-width="1.1"/></svg><div class="a" style="left:0;top:108px;width:1376px;height:30.6px;background:#121212"></div><div class="a" style="left:3px;top:115px;width:72px;height:18px;background:#242424;border:1px solid #333;border-radius:2px"></div><div class="t" style="left:7.5px;top:119.0px;font-size:10.0px;color:#ececec;">A32</div><svg class="a" style="left:64px;top:122px" width="7" height="5"><path d="M0.5 0.5 L3.5 3.5 L6.5 0.5" fill="#ddd" stroke="#ddd" stroke-width="0.8"/></svg><svg class="a" style="left:83.5px;top:118px" width="3" height="12"><circle cx="1.5" cy="2" r="0.9" fill="#ccc"/><circle cx="1.5" cy="6" r="0.9" fill="#ccc"/><circle cx="1.5" cy="10" r="0.9" fill="#ccc"/></svg><div class="a" style="left:96px;top:115px;width:75px;height:18px;background:#1f1f1f;border:1px solid #303030;border-radius:2px"></div><svg class="a" style="left:103px;top:119px" width="60" height="11"><path d="M1.5 1.5 L8.5 8.5 M8.5 1.5 L1.5 8.5" stroke="#666" stroke-width="1.1"/><path d="M26 5 L29 8.5 L35 1.5" fill="none" stroke="#666" stroke-width="1.1"/></svg><div class="t" style="left:152.5px;top:117.5px;font-size:10.5px;color:#ddd;font-family:&quot;Liberation Serif&quot;,serif"><i>fx</i></div><div class="a" style="left:174.4px;top:115.2px;width:1197.6px;height:17.5px;background:#282828;border:1px solid #363636;border-radius:2px"></div><div class="t" style="left:181.7px;top:118.0px;font-size:10.6px;color:#ececec;transform-origin:0 0;transform:scaleX(0.8358);">=IF(ISERROR(VLOOKUP(A502, 'Historical Date'!A:H, 8, FALSE), VLOOKUP(A502, 'MLS Feed'!A:E, 4, FALSE), IF(VLOOKUP(A502, 'Historical Data'!A:H, 8, FALSE)="Closed", "ARCHIVED", VLOOKUP(A502, 'Active Listings'!A:C, 5, FALSE))</div><svg class="a" style="left:1362px;top:121px" width="8" height="6"><path d="M1 1 L4 4 L7 1" fill="none" stroke="#ddd" stroke-width="1.1"/></svg><div class="a" style="left:0;top:737.6px;width:1376px;height:18.4px;background:#151515"></div><div class="a" style="left:0;top:737.6px;width:1376px;height:2px;background:#0a0a0a"></div><svg class="a" style="left:17px;top:742px" width="24" height="9"><path d="M6 1 L3 4.5 L6 8" fill="none" stroke="#999" stroke-width="1"/><path d="M19 1 L22 4.5 L19 8" fill="none" stroke="#999" stroke-width="1"/></svg><div class="a" style="left:66.5px;top:737px;width:192px;height:16.5px;background:linear-gradient(180deg,#eef7ee,#cfe6d0);border-bottom:1px solid #4f8a5c;box-shadow:0 1px 1px #1d3a24"></div><div class="t" style="left:73.5px;top:740.5px;font-size:9.5px;color:#1e3b24;letter-spacing:-0.488px;font-weight:bold;">RealEstate_Analysis_2022_Master_v14.xlsx</div><div class="a" style="left:282.5px;top:741px;width:10px;height:10px;border:1px solid #bbb;border-radius:50%"></div><div class="t" style="left:285px;top:742px;font-size:8px;color:#bbb">+</div><div class="a" style="left:844px;top:742.3px;width:470px;height:8px;background:#585858;border-radius:2px"></div><svg class="a" style="left:821px;top:741px" width="20" height="10"><circle cx="2" cy="2" r="0.8" fill="#aaa"/><circle cx="2" cy="5" r="0.8" fill="#aaa"/><circle cx="2" cy="8" r="0.8" fill="#aaa"/><path d="M14 3 L17 5 L14 7Z" fill="#777"/></svg><svg class="a" style="left:1352px;top:740px" width="8" height="8"><path d="M2 1 L6 4 L2 7 Z" fill="#888"/></svg><div class="a" style="left:0;top:756px;width:1376px;height:12px;background:#1c1c1c;border-top:1px solid #2a2a2a"></div><div class="t" style="left:5.0px;top:759.0px;font-size:8.5px;color:#cfcfcf;">Ready</div><div class="a" style="left:43px;top:757.5px;width:8px;height:9px;border:1px solid #999;border-radius:1px"></div><div class="t" style="left:1017.0px;top:759.0px;font-size:8.5px;color:#cfcfcf;">Calculate</div><div class="t" style="left:1062.0px;top:759.0px;font-size:8.5px;color:#cfcfcf;">Count: 4216</div><div class="t" style="left:1115.4px;top:759.0px;font-size:8.5px;color:#cfcfcf;">Sum: 2104800</div><div class="a" style="left:1177px;top:756px;width:20px;height:12px;background:#333"></div><div class="a" style="left:1182.5px;top:758px;width:8px;height:8px;border:1px solid #bbb"></div><div class="a" style="left:1209.5px;top:758px;width:8px;height:8px;border:1px solid #bbb"></div><div class="a" style="left:1236.5px;top:758px;width:8px;height:8px;border:1px solid #bbb"></div><div class="a" style="left:1258.5px;top:762px;width:4px;height:1px;background:#ccc"></div><div class="a" style="left:1266.5px;top:762px;width:68px;height:1px;background:#999"></div><div class="a" style="left:1299.5px;top:758.5px;width:2.5px;height:8px;background:#ddd"></div><div class="t" style="left:1337px;top:757.5px;font-size:8px;color:#ccc">+</div><div class="t" style="left:1352.0px;top:759.0px;font-size:8.5px;color:#cfcfcf;">100%</div></body></html>
